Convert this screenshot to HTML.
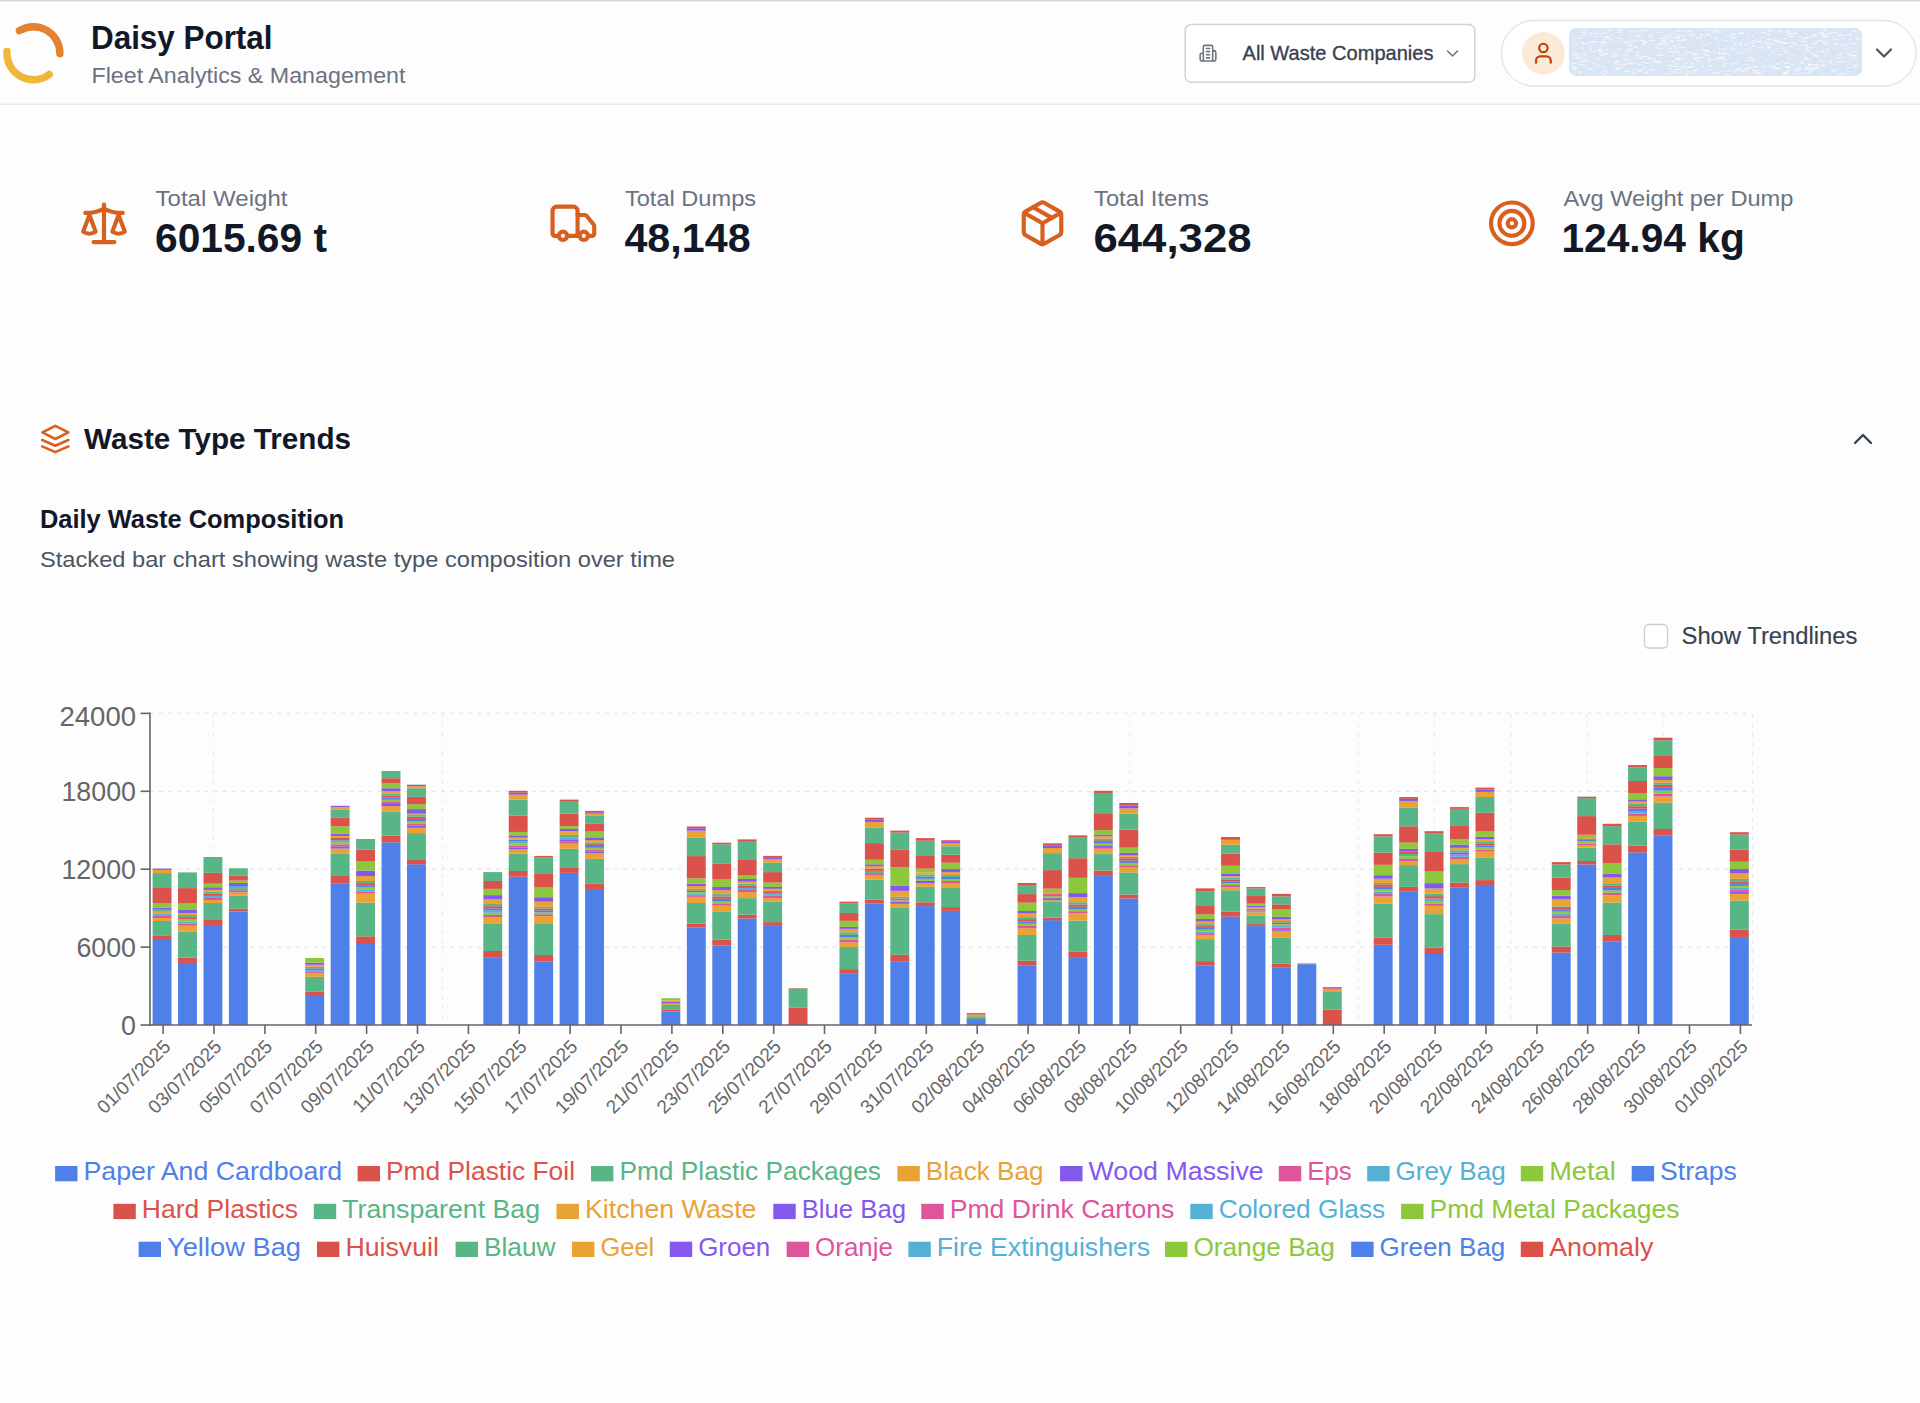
<!DOCTYPE html>
<html><head><meta charset="utf-8"><title>Daisy Portal</title>
<style>
html,body{margin:0;padding:0;background:#fdfdfe;width:1920px;height:1403px;overflow:hidden}
svg{display:block;font-family:"Liberation Sans",sans-serif}
</style></head><body>
<svg width="1920" height="1403" viewBox="0 0 1920 1403">
<rect x="0" y="0" width="1920" height="104" fill="#fdfdfe"/>
<rect x="0" y="0" width="1920" height="1.4" fill="#d3d5da"/>
<rect x="0" y="103.7" width="1920" height="1.2" fill="#e6e7ec"/>
<path d="M19.36 30.73 A26.5 26.5 0 0 1 59.90 53.66" fill="none" stroke="#e3822f" stroke-width="7.4" stroke-linecap="round"/>
<path d="M49.35 74.36 A26.5 26.5 0 0 1 6.96 51.35" fill="none" stroke="#efb73a" stroke-width="7.4" stroke-linecap="round"/>
<text x="91.0" y="48.5" font-size="32.3" fill="#111827" font-weight="bold" textLength="181.5" lengthAdjust="spacingAndGlyphs">Daisy Portal</text>
<text x="91.5" y="83.2" font-size="21.8" fill="#6b7280" textLength="314.0" lengthAdjust="spacingAndGlyphs">Fleet Analytics &amp; Management</text>
<rect x="1185.2" y="24.5" width="289.6" height="57.8" rx="6" fill="#ffffff" stroke="#cfd3da" stroke-width="1.5"/>
<g transform="translate(1198.60,43.80) scale(0.7833)" fill="none" stroke="#6b7280" stroke-width="2" stroke-linecap="round" stroke-linejoin="round"><path d="M6 22V4a2 2 0 0 1 2-2h8a2 2 0 0 1 2 2v18Z"/><path d="M6 12H4a2 2 0 0 0-2 2v6a2 2 0 0 0 2 2h2"/><path d="M18 9h2a2 2 0 0 1 2 2v9a2 2 0 0 1-2 2h-2"/><path d="M10 6h4"/><path d="M10 10h4"/><path d="M10 14h4"/><path d="M10 18h4"/></g>
<text x="1242.5" y="60.2" font-size="21" fill="#374151" textLength="191.0" lengthAdjust="spacingAndGlyphs" stroke="#374151" stroke-width="0.35">All Waste Companies</text>
<path d="M1447.5 51 l5 5 l5 -5" fill="none" stroke="#6b7280" stroke-width="1.6" stroke-linecap="round" stroke-linejoin="round"/>
<rect x="1501.5" y="20.5" width="414.5" height="65.5" rx="32.75" fill="#ffffff" stroke="#e2e4e9" stroke-width="1.3"/>
<circle cx="1543.4" cy="53.3" r="21.4" fill="#fbead6"/>
<g transform="translate(1530.80,40.60) scale(1.0500)" fill="none" stroke="#c2410c" stroke-width="2.1" stroke-linecap="round" stroke-linejoin="round"><path d="M19 21v-2a4 4 0 0 0-4-4H9a4 4 0 0 0-4 4v2"/><circle cx="12" cy="7" r="4"/></g>
<rect x="1569" y="27.9" width="293" height="48" rx="7" fill="#d9e4f4"/>
<path d="M1664.3 35.8h4.3v1h-4.3zM1725.3 45.5h1.3v1h-1.3zM1581.8 48.5h1.3v1h-1.3zM1693.3 66.2h1.6v1h-1.6zM1751.7 71.6h3.9v1h-3.9zM1852.2 31.1h5.3v1h-5.3zM1623.0 55.2h4.2v1h-4.2zM1728.8 31.8h1.3v1h-1.3zM1767.0 48.2h2.6v1h-2.6zM1781.1 42.0h5.9v1h-5.9zM1691.4 63.1h1.8v1h-1.8zM1582.3 59.1h4.8v1h-4.8zM1823.1 43.1h4.5v1h-4.5zM1757.4 73.7h5.1v1h-5.1zM1682.1 59.1h1.1v1h-1.1zM1807.0 67.9h2.4v1h-2.4zM1674.3 68.8h5.8v1h-5.8zM1621.8 39.4h2.2v1h-2.2zM1740.7 40.8h1.0v1h-1.0zM1719.5 56.8h4.4v1h-4.4zM1588.9 32.0h2.0v1h-2.0zM1668.9 31.4h1.0v1h-1.0zM1747.9 35.7h2.3v1h-2.3zM1705.2 50.8h1.4v1h-1.4zM1669.7 40.9h5.1v1h-5.1zM1577.7 71.8h3.6v1h-3.6zM1819.6 60.3h2.3v1h-2.3zM1636.3 52.3h2.8v1h-2.8zM1846.0 45.4h2.1v1h-2.1zM1666.8 65.0h5.9v1h-5.9zM1686.6 71.6h4.6v1h-4.6zM1671.9 53.7h1.7v1h-1.7zM1695.9 68.2h5.1v1h-5.1zM1643.5 42.2h2.2v1h-2.2zM1692.1 70.3h3.5v1h-3.5zM1721.8 29.8h3.2v1h-3.2zM1572.1 65.0h1.9v1h-1.9zM1779.9 54.0h2.6v1h-2.6zM1731.0 64.3h1.5v1h-1.5zM1642.6 41.5h4.9v1h-4.9zM1732.8 63.2h5.6v1h-5.6zM1772.4 68.4h5.7v1h-5.7zM1732.1 71.4h5.2v1h-5.2zM1606.0 48.9h1.4v1h-1.4zM1615.5 61.2h4.3v1h-4.3zM1617.5 48.4h3.6v1h-3.6zM1627.4 43.3h4.6v1h-4.6zM1730.6 48.8h1.1v1h-1.1zM1798.0 72.7h1.5v1h-1.5zM1582.4 64.1h2.4v1h-2.4zM1692.6 70.0h5.1v1h-5.1zM1596.8 31.6h4.4v1h-4.4zM1648.1 34.8h3.6v1h-3.6zM1602.5 36.3h1.3v1h-1.3zM1660.9 42.7h4.8v1h-4.8zM1715.0 37.0h2.7v1h-2.7zM1643.1 29.7h4.7v1h-4.7zM1625.6 50.4h5.7v1h-5.7zM1687.6 44.6h1.3v1h-1.3zM1591.4 62.3h2.3v1h-2.3zM1652.2 39.9h2.5v1h-2.5zM1660.1 45.0h1.0v1h-1.0zM1707.7 51.6h2.0v1h-2.0zM1572.4 40.9h1.4v1h-1.4zM1583.0 30.0h2.5v1h-2.5zM1777.2 68.6h2.9v1h-2.9zM1782.3 65.5h1.7v1h-1.7zM1637.2 30.4h1.7v1h-1.7zM1751.4 59.6h3.4v1h-3.4zM1800.7 62.7h3.5v1h-3.5zM1760.9 32.0h4.7v1h-4.7zM1592.4 41.0h4.6v1h-4.6zM1784.1 72.9h3.5v1h-3.5zM1756.1 32.5h1.7v1h-1.7zM1785.0 42.7h3.8v1h-3.8zM1765.6 42.1h3.6v1h-3.6zM1705.3 34.3h5.5v1h-5.5zM1852.7 71.1h1.1v1h-1.1zM1807.1 72.6h3.2v1h-3.2zM1631.4 71.6h2.1v1h-2.1zM1611.8 52.6h5.8v1h-5.8zM1637.6 69.4h3.4v1h-3.4zM1572.0 51.1h3.3v1h-3.3zM1571.5 62.8h5.2v1h-5.2zM1837.8 61.1h5.5v1h-5.5zM1678.2 46.7h6.0v1h-6.0zM1674.9 48.3h2.4v1h-2.4zM1642.8 41.0h3.6v1h-3.6zM1752.7 70.1h5.7v1h-5.7zM1778.2 31.2h4.7v1h-4.7zM1787.8 58.0h2.4v1h-2.4zM1837.9 34.7h3.4v1h-3.4zM1656.8 62.3h5.9v1h-5.9zM1759.9 42.5h3.8v1h-3.8zM1700.6 35.3h2.0v1h-2.0zM1669.5 33.1h2.2v1h-2.2zM1735.0 68.9h4.7v1h-4.7zM1690.2 52.6h2.9v1h-2.9zM1588.9 41.5h5.8v1h-5.8zM1716.0 57.3h5.3v1h-5.3zM1649.1 40.2h3.0v1h-3.0zM1845.7 67.2h5.4v1h-5.4zM1580.3 60.9h5.5v1h-5.5zM1808.8 67.5h5.9v1h-5.9zM1638.0 70.4h4.2v1h-4.2zM1603.3 32.2h3.6v1h-3.6zM1682.8 39.1h4.0v1h-4.0zM1825.5 50.4h2.2v1h-2.2zM1847.7 60.7h2.5v1h-2.5zM1714.5 59.4h3.1v1h-3.1zM1763.2 70.6h2.1v1h-2.1zM1668.4 47.9h4.4v1h-4.4zM1800.6 62.3h3.5v1h-3.5zM1850.3 43.0h5.1v1h-5.1zM1713.8 37.4h2.1v1h-2.1zM1762.6 71.7h1.7v1h-1.7zM1632.3 72.8h1.7v1h-1.7zM1782.0 73.9h5.7v1h-5.7zM1624.4 71.1h4.7v1h-4.7zM1762.4 46.0h2.9v1h-2.9zM1619.7 29.1h2.4v1h-2.4zM1846.2 34.6h5.8v1h-5.8zM1673.7 66.0h5.1v1h-5.1zM1626.6 45.4h5.5v1h-5.5zM1689.3 65.5h4.8v1h-4.8zM1581.0 31.8h5.6v1h-5.6zM1786.2 69.4h2.7v1h-2.7zM1834.9 57.5h5.7v1h-5.7zM1682.3 40.3h3.1v1h-3.1zM1808.0 63.8h4.0v1h-4.0zM1663.0 45.3h4.9v1h-4.9zM1627.8 62.9h2.2v1h-2.2zM1825.4 73.5h2.3v1h-2.3zM1598.8 51.4h4.5v1h-4.5zM1786.4 67.1h4.3v1h-4.3zM1813.2 42.2h3.8v1h-3.8zM1783.6 38.0h2.2v1h-2.2zM1615.2 68.8h3.9v1h-3.9zM1685.1 73.7h3.5v1h-3.5zM1803.8 58.4h6.0v1h-6.0zM1582.6 42.2h1.6v1h-1.6zM1851.2 55.2h5.7v1h-5.7zM1633.7 45.6h1.7v1h-1.7zM1644.4 56.0h4.3v1h-4.3zM1574.3 43.7h4.4v1h-4.4zM1660.9 38.2h5.0v1h-5.0zM1589.2 33.6h3.0v1h-3.0zM1661.0 54.5h2.8v1h-2.8zM1819.9 73.8h2.8v1h-2.8zM1703.7 36.3h1.1v1h-1.1zM1677.8 51.7h1.7v1h-1.7zM1721.1 70.6h1.5v1h-1.5zM1802.8 72.5h2.0v1h-2.0zM1842.6 72.9h3.4v1h-3.4zM1808.5 36.2h4.9v1h-4.9zM1687.5 67.1h5.1v1h-5.1zM1633.8 47.0h3.6v1h-3.6zM1582.8 54.3h4.8v1h-4.8zM1812.4 34.3h4.0v1h-4.0zM1751.6 42.8h3.1v1h-3.1zM1693.6 58.6h3.2v1h-3.2zM1577.7 56.9h3.4v1h-3.4zM1790.9 64.1h3.3v1h-3.3zM1707.3 33.8h1.6v1h-1.6zM1597.4 48.9h3.6v1h-3.6zM1718.3 31.4h3.5v1h-3.5zM1712.7 72.0h5.6v1h-5.6zM1798.1 70.9h1.3v1h-1.3zM1788.8 36.1h5.5v1h-5.5zM1631.0 40.8h3.5v1h-3.5zM1604.1 52.9h4.2v1h-4.2zM1601.1 73.7h4.1v1h-4.1zM1800.7 40.9h6.0v1h-6.0zM1674.8 63.4h3.2v1h-3.2zM1785.2 31.2h5.1v1h-5.1zM1661.0 29.1h1.2v1h-1.2zM1609.0 39.2h4.3v1h-4.3zM1571.8 45.0h1.5v1h-1.5zM1635.6 55.3h3.9v1h-3.9zM1821.9 64.2h3.0v1h-3.0zM1574.3 58.0h3.8v1h-3.8zM1642.6 69.7h1.2v1h-1.2zM1574.6 53.8h5.7v1h-5.7zM1805.3 36.9h2.5v1h-2.5zM1572.8 67.0h4.7v1h-4.7zM1784.6 49.4h2.1v1h-2.1zM1771.2 67.0h4.6v1h-4.6zM1730.5 48.6h4.9v1h-4.9zM1647.4 57.9h5.8v1h-5.8zM1824.5 29.7h2.3v1h-2.3zM1785.2 71.5h4.7v1h-4.7zM1696.9 61.6h3.9v1h-3.9zM1670.3 35.4h1.1v1h-1.1zM1834.3 71.5h1.5v1h-1.5zM1753.6 66.1h4.2v1h-4.2zM1599.8 33.4h4.8v1h-4.8zM1662.9 48.1h1.1v1h-1.1zM1652.4 61.2h2.8v1h-2.8zM1670.9 60.7h3.7v1h-3.7zM1819.3 33.1h5.1v1h-5.1zM1646.0 71.5h2.4v1h-2.4zM1751.8 45.0h3.0v1h-3.0zM1827.4 32.9h5.4v1h-5.4zM1630.4 40.8h5.5v1h-5.5zM1680.2 68.8h2.2v1h-2.2zM1761.7 62.4h1.8v1h-1.8zM1793.7 55.1h1.6v1h-1.6zM1825.9 39.7h2.0v1h-2.0zM1773.5 67.0h1.8v1h-1.8zM1642.3 43.7h3.6v1h-3.6zM1600.3 72.3h1.5v1h-1.5zM1854.3 64.8h4.7v1h-4.7zM1627.5 57.7h1.5v1h-1.5zM1770.7 51.5h4.2v1h-4.2zM1752.3 40.3h3.1v1h-3.1zM1623.7 58.5h4.9v1h-4.9zM1712.1 72.9h1.2v1h-1.2zM1617.3 64.2h5.7v1h-5.7zM1718.5 57.8h5.1v1h-5.1zM1673.4 31.5h2.4v1h-2.4zM1804.2 57.5h3.3v1h-3.3zM1806.8 65.7h3.3v1h-3.3zM1728.9 34.6h5.2v1h-5.2zM1816.0 41.0h2.9v1h-2.9zM1652.0 40.0h2.5v1h-2.5zM1694.4 57.7h4.3v1h-4.3zM1759.9 40.3h1.5v1h-1.5zM1638.3 63.9h2.7v1h-2.7zM1730.9 40.9h2.2v1h-2.2zM1713.0 31.6h3.3v1h-3.3zM1572.9 66.8h3.3v1h-3.3zM1762.6 66.8h2.9v1h-2.9zM1666.2 73.2h3.6v1h-3.6zM1668.5 67.8h2.8v1h-2.8zM1722.4 63.7h2.1v1h-2.1zM1692.6 53.9h5.1v1h-5.1zM1809.4 47.2h3.5v1h-3.5zM1666.3 43.3h2.5v1h-2.5zM1826.1 53.5h1.2v1h-1.2zM1748.6 57.2h4.5v1h-4.5zM1767.1 38.6h4.3v1h-4.3zM1790.7 33.6h1.9v1h-1.9zM1794.1 70.1h4.3v1h-4.3zM1807.9 64.4h3.8v1h-3.8zM1658.0 48.0h2.6v1h-2.6zM1755.8 71.0h1.3v1h-1.3zM1582.3 34.3h5.1v1h-5.1zM1835.6 49.1h1.1v1h-1.1zM1741.5 71.2h5.9v1h-5.9zM1689.8 33.6h4.2v1h-4.2zM1608.1 29.8h4.6v1h-4.6zM1776.5 67.5h4.6v1h-4.6zM1644.2 72.4h4.6v1h-4.6zM1575.2 58.3h5.1v1h-5.1zM1711.1 31.7h2.8v1h-2.8zM1675.6 58.0h4.1v1h-4.1zM1852.5 66.4h4.0v1h-4.0zM1744.3 69.3h5.0v1h-5.0zM1571.5 40.8h3.1v1h-3.1zM1804.8 68.0h3.9v1h-3.9zM1628.7 62.8h5.7v1h-5.7zM1745.8 59.5h3.3v1h-3.3zM1644.4 62.8h5.0v1h-5.0zM1596.3 65.3h4.9v1h-4.9zM1737.9 69.4h5.4v1h-5.4zM1708.3 55.5h1.9v1h-1.9zM1623.0 60.5h2.8v1h-2.8zM1686.9 52.3h1.7v1h-1.7zM1797.8 36.0h4.0v1h-4.0zM1820.4 50.9h3.8v1h-3.8zM1806.8 72.4h2.3v1h-2.3zM1628.9 37.1h1.4v1h-1.4zM1833.1 31.9h4.0v1h-4.0zM1605.5 72.2h2.3v1h-2.3zM1755.5 72.0h4.3v1h-4.3zM1634.9 30.7h2.3v1h-2.3zM1831.0 69.7h5.2v1h-5.2zM1601.4 43.6h2.3v1h-2.3zM1709.6 36.6h2.2v1h-2.2zM1766.2 29.6h4.6v1h-4.6zM1820.6 69.0h1.7v1h-1.7zM1701.3 44.3h5.1v1h-5.1zM1751.9 35.4h2.1v1h-2.1zM1647.7 47.5h1.8v1h-1.8zM1812.8 44.1h1.8v1h-1.8zM1587.4 69.3h4.3v1h-4.3zM1708.5 41.9h2.3v1h-2.3zM1599.1 42.0h5.5v1h-5.5zM1780.2 42.2h5.9v1h-5.9zM1803.4 44.3h1.7v1h-1.7zM1810.7 52.7h1.9v1h-1.9zM1833.7 38.8h3.9v1h-3.9zM1622.9 63.7h4.6v1h-4.6zM1593.8 32.9h4.0v1h-4.0zM1804.7 55.2h2.0v1h-2.0zM1782.0 47.4h4.6v1h-4.6zM1713.0 29.7h5.6v1h-5.6zM1676.7 36.4h2.9v1h-2.9zM1572.3 52.4h3.2v1h-3.2zM1588.6 68.3h5.8v1h-5.8zM1718.8 52.9h3.7v1h-3.7zM1849.6 39.1h1.9v1h-1.9zM1643.1 65.8h1.2v1h-1.2zM1772.3 37.8h1.1v1h-1.1zM1737.0 52.5h4.5v1h-4.5zM1821.4 61.3h1.2v1h-1.2zM1713.2 51.5h2.4v1h-2.4zM1613.4 54.8h4.7v1h-4.7zM1808.9 71.2h2.9v1h-2.9zM1794.7 44.2h2.2v1h-2.2zM1805.7 67.1h1.3v1h-1.3zM1846.9 71.0h2.2v1h-2.2zM1753.2 45.4h3.7v1h-3.7zM1695.7 51.7h1.1v1h-1.1zM1804.1 68.8h5.4v1h-5.4zM1755.8 41.0h4.4v1h-4.4zM1727.2 70.6h4.1v1h-4.1zM1720.8 48.5h5.8v1h-5.8zM1659.0 58.1h1.6v1h-1.6zM1846.4 52.1h2.3v1h-2.3zM1724.7 35.7h1.6v1h-1.6zM1655.6 47.3h2.4v1h-2.4zM1703.7 53.7h4.1v1h-4.1zM1660.4 39.9h2.1v1h-2.1zM1681.4 55.4h1.1v1h-1.1zM1819.2 39.7h3.8v1h-3.8zM1616.7 32.0h5.4v1h-5.4zM1748.5 67.2h5.1v1h-5.1zM1783.8 62.4h4.8v1h-4.8zM1797.1 60.9h5.6v1h-5.6zM1821.8 29.2h4.8v1h-4.8zM1714.4 72.3h3.9v1h-3.9zM1796.7 68.3h4.0v1h-4.0zM1701.3 49.6h4.6v1h-4.6zM1683.5 54.0h2.9v1h-2.9zM1797.7 67.2h3.5v1h-3.5zM1624.1 42.7h1.7v1h-1.7zM1738.5 33.0h5.6v1h-5.6zM1813.9 66.7h5.8v1h-5.8zM1693.8 70.0h1.1v1h-1.1zM1726.1 73.9h3.6v1h-3.6zM1768.3 46.5h2.8v1h-2.8zM1672.1 71.7h4.4v1h-4.4zM1599.5 45.8h3.0v1h-3.0zM1736.3 68.6h5.8v1h-5.8zM1697.8 57.1h6.0v1h-6.0zM1723.7 65.7h1.9v1h-1.9zM1852.8 66.2h3.6v1h-3.6zM1826.8 47.9h1.8v1h-1.8zM1718.3 51.7h1.9v1h-1.9zM1659.3 60.1h1.0v1h-1.0zM1813.5 55.4h4.3v1h-4.3zM1724.1 73.9h3.9v1h-3.9zM1606.0 36.1h4.8v1h-4.8zM1747.5 65.3h1.3v1h-1.3zM1792.9 43.5h4.6v1h-4.6zM1738.7 44.7h3.2v1h-3.2zM1697.6 56.9h2.2v1h-2.2zM1713.7 71.7h2.2v1h-2.2zM1710.5 64.7h2.2v1h-2.2zM1674.2 37.4h5.9v1h-5.9zM1732.7 34.2h3.7v1h-3.7zM1672.2 40.0h2.0v1h-2.0zM1639.3 30.6h4.3v1h-4.3zM1615.9 60.8h1.5v1h-1.5zM1716.4 39.2h3.3v1h-3.3zM1774.5 40.7h5.5v1h-5.5zM1677.0 40.1h4.0v1h-4.0zM1822.2 34.5h3.6v1h-3.6zM1734.5 43.0h2.9v1h-2.9zM1602.4 54.3h2.8v1h-2.8zM1656.5 32.0h2.6v1h-2.6zM1607.3 61.3h2.4v1h-2.4zM1772.4 40.2h5.2v1h-5.2zM1782.4 61.1h1.2v1h-1.2zM1617.7 37.9h2.5v1h-2.5zM1582.3 43.0h4.2v1h-4.2zM1812.8 54.7h4.6v1h-4.6zM1696.3 59.8h2.7v1h-2.7zM1811.3 63.9h2.4v1h-2.4zM1817.0 56.3h1.2v1h-1.2zM1786.9 32.9h4.5v1h-4.5zM1786.3 66.3h2.4v1h-2.4zM1783.7 66.3h4.1v1h-4.1zM1586.6 60.4h3.1v1h-3.1zM1838.3 34.7h4.8v1h-4.8zM1773.4 65.3h2.3v1h-2.3zM1850.2 57.7h3.7v1h-3.7zM1588.1 45.1h3.1v1h-3.1zM1639.5 39.9h3.6v1h-3.6zM1604.0 42.0h2.8v1h-2.8zM1700.0 34.1h2.6v1h-2.6zM1675.5 36.6h1.4v1h-1.4zM1853.3 54.4h1.5v1h-1.5zM1696.1 37.5h3.7v1h-3.7zM1758.9 40.3h2.2v1h-2.2zM1579.0 63.8h5.2v1h-5.2zM1665.1 37.3h5.1v1h-5.1zM1713.4 51.5h1.8v1h-1.8zM1738.4 32.6h4.4v1h-4.4zM1698.6 72.6h1.4v1h-1.4zM1697.6 37.6h4.6v1h-4.6zM1813.2 67.5h4.9v1h-4.9zM1652.6 58.8h3.6v1h-3.6zM1831.4 36.4h2.5v1h-2.5zM1733.3 44.7h2.0v1h-2.0zM1656.5 54.7h5.8v1h-5.8zM1579.0 37.5h4.4v1h-4.4zM1595.5 58.7h2.9v1h-2.9zM1690.9 52.8h3.8v1h-3.8zM1603.9 37.1h5.4v1h-5.4zM1603.3 67.8h2.3v1h-2.3zM1723.9 40.3h3.4v1h-3.4zM1636.2 54.8h1.6v1h-1.6zM1740.5 32.6h3.0v1h-3.0zM1600.4 66.4h3.0v1h-3.0zM1847.5 54.3h4.9v1h-4.9zM1794.5 31.6h2.2v1h-2.2zM1575.4 55.7h2.1v1h-2.1zM1767.0 66.2h1.6v1h-1.6zM1783.3 71.7h4.6v1h-4.6zM1603.5 70.6h4.4v1h-4.4zM1626.6 49.1h5.2v1h-5.2zM1680.7 35.5h5.4v1h-5.4zM1769.6 65.4h5.7v1h-5.7zM1766.7 46.7h3.4v1h-3.4zM1740.7 31.0h1.8v1h-1.8zM1705.7 55.0h2.9v1h-2.9zM1572.7 55.1h2.7v1h-2.7zM1703.3 73.4h1.2v1h-1.2zM1764.2 41.3h2.4v1h-2.4zM1784.0 51.9h4.2v1h-4.2zM1729.6 47.3h1.3v1h-1.3zM1664.1 73.5h3.4v1h-3.4zM1641.1 39.6h2.7v1h-2.7zM1573.1 68.2h3.3v1h-3.3zM1734.8 42.6h1.8v1h-1.8zM1657.8 42.9h4.6v1h-4.6zM1841.0 44.3h5.6v1h-5.6zM1590.5 50.8h5.5v1h-5.5zM1645.2 30.0h1.8v1h-1.8zM1773.9 38.8h3.0v1h-3.0zM1744.6 67.9h4.2v1h-4.2zM1782.4 72.3h4.0v1h-4.0zM1804.1 68.4h2.7v1h-2.7zM1757.9 47.2h4.4v1h-4.4zM1667.3 51.2h4.0v1h-4.0zM1704.5 29.6h5.6v1h-5.6zM1665.8 33.2h1.8v1h-1.8zM1792.0 33.0h5.1v1h-5.1zM1744.3 43.9h4.7v1h-4.7zM1775.9 63.3h4.9v1h-4.9zM1793.5 73.0h3.3v1h-3.3zM1721.7 71.3h1.7v1h-1.7zM1708.0 58.5h4.9v1h-4.9zM1856.0 39.3h4.8v1h-4.8zM1579.0 35.0h1.3v1h-1.3zM1730.9 37.2h5.7v1h-5.7zM1617.7 30.3h4.9v1h-4.9zM1853.9 51.5h4.2v1h-4.2zM1686.7 67.9h1.3v1h-1.3zM1635.5 40.3h2.3v1h-2.3zM1657.0 73.7h2.1v1h-2.1zM1616.1 67.8h5.3v1h-5.3zM1787.4 66.0h2.4v1h-2.4zM1599.1 36.6h4.4v1h-4.4zM1769.6 30.7h3.5v1h-3.5zM1662.1 68.5h1.6v1h-1.6zM1613.6 62.2h3.5v1h-3.5zM1672.8 51.3h5.6v1h-5.6zM1649.6 37.0h2.3v1h-2.3zM1583.4 51.9h3.0v1h-3.0zM1822.7 61.3h3.0v1h-3.0zM1691.7 72.8h2.9v1h-2.9zM1689.1 35.4h6.0v1h-6.0zM1679.6 39.8h2.0v1h-2.0zM1813.8 64.3h5.5v1h-5.5zM1770.9 43.6h4.2v1h-4.2zM1638.5 57.3h4.7v1h-4.7zM1766.0 43.5h4.1v1h-4.1zM1707.3 61.5h3.6v1h-3.6zM1634.7 35.4h5.6v1h-5.6zM1721.9 52.7h5.1v1h-5.1zM1809.3 69.2h5.3v1h-5.3zM1680.8 66.4h5.1v1h-5.1zM1615.3 40.3h1.5v1h-1.5zM1802.3 52.5h3.3v1h-3.3zM1684.9 73.9h4.5v1h-4.5zM1708.8 64.9h4.8v1h-4.8zM1766.9 45.5h3.6v1h-3.6zM1677.8 44.3h2.9v1h-2.9zM1628.8 54.7h1.3v1h-1.3zM1777.8 41.4h2.6v1h-2.6zM1678.0 31.0h3.2v1h-3.2zM1804.5 44.9h2.9v1h-2.9zM1678.2 59.0h2.6v1h-2.6zM1788.7 46.1h3.6v1h-3.6zM1830.6 63.1h1.1v1h-1.1zM1704.2 49.8h5.2v1h-5.2zM1707.4 69.1h3.2v1h-3.2zM1686.7 30.8h4.4v1h-4.4zM1792.5 63.6h1.6v1h-1.6zM1593.2 65.8h1.5v1h-1.5zM1822.1 35.5h2.7v1h-2.7zM1572.7 73.5h2.4v1h-2.4zM1661.2 40.5h5.3v1h-5.3zM1718.2 47.9h1.3v1h-1.3zM1820.6 65.1h5.3v1h-5.3zM1629.2 31.3h3.7v1h-3.7zM1704.7 51.0h3.9v1h-3.9zM1801.8 38.0h5.6v1h-5.6zM1585.7 43.1h3.7v1h-3.7zM1655.0 61.0h5.0v1h-5.0zM1587.6 48.5h4.2v1h-4.2zM1819.4 32.2h4.0v1h-4.0zM1836.7 54.2h5.0v1h-5.0zM1765.1 59.4h2.5v1h-2.5zM1812.4 35.6h5.6v1h-5.6zM1583.0 66.6h2.5v1h-2.5zM1738.6 43.3h3.8v1h-3.8zM1833.6 43.6h5.2v1h-5.2zM1801.2 73.1h3.0v1h-3.0zM1680.4 57.8h2.1v1h-2.1zM1598.0 49.9h4.6v1h-4.6zM1766.5 34.1h5.1v1h-5.1zM1836.9 73.8h5.7v1h-5.7zM1654.7 44.7h4.8v1h-4.8zM1743.2 53.3h1.4v1h-1.4zM1649.1 69.2h5.2v1h-5.2zM1670.2 71.5h4.3v1h-4.3zM1622.5 64.4h2.5v1h-2.5zM1742.5 49.8h1.2v1h-1.2zM1599.0 58.1h1.7v1h-1.7zM1672.6 45.9h4.3v1h-4.3zM1822.5 50.6h1.7v1h-1.7zM1824.2 34.3h3.5v1h-3.5zM1604.9 50.1h1.8v1h-1.8zM1717.0 45.5h2.0v1h-2.0zM1637.0 62.8h1.8v1h-1.8zM1579.9 46.7h3.6v1h-3.6zM1827.5 32.8h3.9v1h-3.9zM1742.4 64.3h4.6v1h-4.6zM1641.8 56.0h5.9v1h-5.9zM1749.1 60.1h5.1v1h-5.1zM1804.4 49.8h5.6v1h-5.6zM1841.8 47.5h3.0v1h-3.0zM1641.5 62.0h4.4v1h-4.4zM1670.2 35.3h2.0v1h-2.0zM1821.8 42.5h5.8v1h-5.8zM1643.6 66.7h2.2v1h-2.2zM1572.3 51.0h1.1v1h-1.1zM1805.0 47.8h4.0v1h-4.0zM1749.4 42.1h1.4v1h-1.4zM1624.0 41.2h5.8v1h-5.8zM1684.6 51.5h5.8v1h-5.8zM1855.7 37.5h5.2v1h-5.2zM1701.9 65.4h2.3v1h-2.3zM1600.1 53.9h5.3v1h-5.3zM1675.2 58.8h4.2v1h-4.2zM1721.4 59.4h5.5v1h-5.5zM1827.6 61.8h4.7v1h-4.7zM1612.6 55.4h3.9v1h-3.9zM1684.0 62.6h4.2v1h-4.2zM1790.6 42.1h3.7v1h-3.7zM1799.6 44.6h1.7v1h-1.7zM1823.7 36.3h4.7v1h-4.7zM1660.8 31.4h2.5v1h-2.5zM1849.5 72.3h1.9v1h-1.9zM1842.8 37.9h2.6v1h-2.6zM1602.2 40.7h3.0v1h-3.0z" fill="#f7f8fb"/>
<path d="M1612.5 34.3h2.5v1h-2.5zM1701.5 42.5h5.0v1h-5.0zM1641.3 54.8h3.6v1h-3.6zM1738.0 49.5h5.2v1h-5.2zM1707.5 58.9h1.3v1h-1.3zM1619.4 34.3h1.3v1h-1.3zM1608.2 40.1h3.0v1h-3.0zM1594.2 49.2h3.7v1h-3.7zM1677.3 54.5h5.8v1h-5.8zM1830.1 64.1h5.4v1h-5.4zM1684.0 47.0h1.5v1h-1.5zM1600.2 45.4h1.1v1h-1.1zM1675.9 34.5h5.2v1h-5.2zM1727.4 30.2h3.6v1h-3.6zM1619.1 63.7h3.7v1h-3.7zM1665.9 39.0h5.1v1h-5.1zM1816.6 65.3h5.1v1h-5.1zM1579.0 41.6h2.3v1h-2.3zM1846.5 49.1h5.7v1h-5.7zM1627.7 38.2h4.1v1h-4.1zM1813.0 50.6h4.3v1h-4.3zM1595.4 58.7h5.5v1h-5.5zM1787.0 50.5h1.9v1h-1.9zM1607.6 35.8h5.5v1h-5.5zM1613.1 66.2h5.9v1h-5.9zM1850.6 58.2h3.6v1h-3.6zM1645.7 47.9h1.7v1h-1.7zM1672.9 49.6h3.9v1h-3.9zM1747.4 51.7h3.6v1h-3.6zM1701.3 53.0h3.4v1h-3.4zM1592.1 59.1h4.9v1h-4.9zM1825.3 72.5h2.1v1h-2.1zM1685.7 50.9h5.9v1h-5.9zM1750.7 52.1h1.3v1h-1.3zM1614.0 70.4h3.9v1h-3.9zM1591.9 71.2h4.2v1h-4.2zM1595.1 67.5h1.3v1h-1.3zM1701.7 44.3h3.8v1h-3.8zM1806.8 48.4h3.5v1h-3.5zM1684.2 51.8h4.4v1h-4.4zM1669.7 66.5h4.5v1h-4.5zM1595.3 66.9h5.4v1h-5.4zM1616.4 49.1h2.3v1h-2.3zM1851.1 53.6h2.2v1h-2.2zM1739.6 52.8h4.8v1h-4.8zM1854.6 35.7h4.6v1h-4.6zM1583.6 66.6h5.5v1h-5.5zM1716.3 66.6h5.0v1h-5.0zM1739.2 69.2h4.4v1h-4.4zM1601.2 66.6h3.8v1h-3.8zM1709.0 59.8h4.8v1h-4.8zM1588.5 41.1h4.4v1h-4.4zM1807.2 51.9h5.4v1h-5.4zM1611.5 44.5h2.6v1h-2.6zM1600.3 66.6h2.4v1h-2.4zM1678.5 72.0h5.4v1h-5.4zM1619.2 36.3h2.0v1h-2.0zM1714.2 38.9h5.5v1h-5.5zM1740.1 29.0h3.0v1h-3.0zM1602.4 35.9h3.6v1h-3.6zM1842.1 61.5h4.2v1h-4.2zM1702.7 53.8h1.2v1h-1.2zM1607.9 40.3h4.2v1h-4.2zM1657.8 49.7h5.8v1h-5.8zM1634.8 63.2h2.5v1h-2.5zM1588.3 46.7h5.5v1h-5.5zM1585.2 50.3h2.9v1h-2.9zM1846.8 56.8h2.3v1h-2.3zM1662.1 41.4h1.0v1h-1.0zM1638.4 50.4h5.8v1h-5.8zM1838.3 37.2h5.0v1h-5.0zM1580.8 53.9h2.6v1h-2.6zM1638.4 47.8h4.1v1h-4.1zM1707.7 65.9h5.2v1h-5.2zM1820.4 49.2h2.3v1h-2.3zM1843.4 33.8h4.0v1h-4.0zM1755.1 33.1h1.8v1h-1.8zM1689.0 41.7h2.5v1h-2.5zM1780.7 38.2h1.0v1h-1.0zM1693.0 65.9h3.0v1h-3.0zM1755.5 69.9h1.4v1h-1.4zM1837.7 46.5h5.5v1h-5.5zM1606.4 40.1h4.6v1h-4.6zM1754.3 32.7h4.7v1h-4.7zM1844.8 35.1h5.3v1h-5.3zM1781.8 65.7h2.0v1h-2.0zM1805.9 35.5h3.5v1h-3.5zM1581.6 37.2h1.8v1h-1.8zM1766.7 69.3h1.8v1h-1.8zM1822.4 54.0h3.9v1h-3.9zM1755.1 73.3h3.9v1h-3.9zM1748.4 48.5h3.6v1h-3.6zM1750.7 50.4h1.7v1h-1.7zM1641.2 35.7h1.5v1h-1.5zM1756.9 49.0h5.7v1h-5.7zM1687.9 39.7h1.3v1h-1.3zM1628.5 56.4h3.5v1h-3.5zM1585.0 69.0h4.9v1h-4.9zM1637.9 30.7h2.7v1h-2.7zM1824.5 43.8h2.2v1h-2.2zM1752.6 60.2h4.3v1h-4.3zM1706.2 66.8h4.5v1h-4.5zM1632.0 57.0h1.4v1h-1.4zM1612.6 30.2h1.5v1h-1.5zM1770.5 57.5h4.5v1h-4.5zM1589.9 55.6h2.8v1h-2.8zM1807.0 69.1h1.3v1h-1.3zM1603.2 30.5h5.2v1h-5.2zM1848.6 51.7h5.3v1h-5.3zM1579.9 47.6h3.2v1h-3.2zM1571.4 38.1h4.8v1h-4.8zM1572.3 51.1h3.5v1h-3.5zM1624.1 51.3h2.7v1h-2.7zM1772.4 51.4h1.5v1h-1.5zM1594.3 64.5h4.5v1h-4.5zM1724.1 63.0h4.8v1h-4.8zM1671.4 43.7h1.8v1h-1.8zM1665.5 37.5h5.9v1h-5.9zM1682.8 30.5h3.0v1h-3.0zM1611.8 56.2h3.0v1h-3.0zM1832.5 48.4h3.9v1h-3.9zM1692.3 39.3h4.6v1h-4.6zM1793.9 60.5h5.3v1h-5.3zM1755.8 49.4h2.6v1h-2.6zM1599.2 47.9h4.9v1h-4.9zM1750.0 47.4h4.4v1h-4.4zM1600.1 54.9h3.7v1h-3.7zM1689.2 71.7h2.1v1h-2.1zM1684.0 63.3h1.6v1h-1.6zM1574.8 47.8h3.1v1h-3.1zM1672.4 40.9h2.1v1h-2.1zM1841.7 52.7h2.1v1h-2.1zM1683.9 38.5h1.6v1h-1.6zM1636.1 72.4h2.8v1h-2.8zM1693.7 37.4h1.0v1h-1.0zM1838.5 67.5h1.3v1h-1.3zM1831.9 64.3h1.7v1h-1.7zM1753.4 29.7h1.1v1h-1.1zM1831.4 64.6h1.8v1h-1.8zM1746.2 64.2h4.3v1h-4.3zM1798.0 66.7h2.0v1h-2.0zM1723.9 62.4h3.2v1h-3.2zM1712.5 51.4h3.7v1h-3.7zM1847.7 32.4h4.2v1h-4.2zM1579.2 56.4h4.4v1h-4.4zM1829.5 30.5h4.6v1h-4.6zM1716.9 72.9h4.3v1h-4.3zM1753.8 64.3h1.2v1h-1.2zM1572.8 37.5h5.6v1h-5.6zM1760.5 64.5h5.5v1h-5.5zM1614.7 29.7h1.0v1h-1.0zM1606.0 72.5h1.4v1h-1.4zM1782.3 37.4h1.3v1h-1.3zM1752.0 60.9h3.3v1h-3.3zM1660.6 61.8h1.8v1h-1.8zM1697.4 59.5h1.7v1h-1.7zM1682.1 64.4h5.7v1h-5.7zM1734.2 42.2h1.3v1h-1.3zM1773.5 66.2h2.7v1h-2.7zM1694.4 69.0h2.9v1h-2.9zM1806.0 68.9h1.2v1h-1.2zM1816.1 65.3h4.4v1h-4.4zM1670.9 32.8h3.8v1h-3.8zM1858.2 45.8h1.5v1h-1.5zM1720.6 29.9h1.2v1h-1.2zM1795.4 48.2h5.7v1h-5.7zM1731.5 68.2h3.3v1h-3.3zM1700.1 36.2h5.8v1h-5.8zM1797.5 60.9h4.2v1h-4.2zM1587.1 35.5h4.8v1h-4.8zM1765.9 42.4h4.0v1h-4.0zM1581.4 70.7h2.1v1h-2.1zM1598.9 70.8h5.2v1h-5.2zM1776.6 53.9h1.7v1h-1.7zM1662.6 69.6h1.6v1h-1.6zM1675.9 73.6h6.0v1h-6.0zM1649.9 38.3h4.1v1h-4.1zM1804.5 44.1h5.2v1h-5.2zM1822.1 41.0h1.9v1h-1.9zM1605.8 61.2h5.1v1h-5.1zM1663.4 61.0h2.9v1h-2.9zM1687.8 35.2h4.0v1h-4.0zM1812.8 52.7h3.0v1h-3.0zM1696.4 73.2h5.0v1h-5.0zM1850.3 63.9h5.7v1h-5.7zM1596.3 53.6h5.2v1h-5.2zM1735.2 58.3h2.0v1h-2.0zM1653.0 73.4h2.5v1h-2.5zM1588.9 46.5h3.2v1h-3.2zM1602.5 39.1h5.8v1h-5.8zM1615.5 44.2h2.8v1h-2.8zM1733.7 51.4h5.6v1h-5.6zM1828.6 60.0h5.1v1h-5.1zM1752.5 56.1h2.8v1h-2.8zM1754.3 30.9h3.1v1h-3.1zM1714.4 53.9h2.3v1h-2.3zM1599.8 36.7h3.6v1h-3.6zM1619.8 41.0h1.5v1h-1.5zM1586.7 69.1h3.9v1h-3.9zM1839.1 67.5h2.6v1h-2.6zM1806.0 42.7h4.0v1h-4.0zM1777.9 39.0h2.5v1h-2.5zM1687.1 31.9h1.6v1h-1.6zM1811.5 34.8h3.2v1h-3.2zM1802.8 36.2h2.8v1h-2.8zM1679.5 72.1h2.0v1h-2.0zM1648.9 63.7h2.9v1h-2.9zM1622.0 67.3h2.6v1h-2.6zM1832.8 63.9h5.4v1h-5.4zM1609.1 41.4h1.1v1h-1.1zM1762.1 44.8h3.1v1h-3.1zM1752.1 37.2h1.6v1h-1.6zM1603.0 64.6h2.1v1h-2.1zM1843.6 48.1h5.7v1h-5.7zM1660.4 35.1h4.5v1h-4.5zM1840.5 44.8h2.5v1h-2.5zM1611.9 54.3h2.7v1h-2.7zM1728.9 63.2h1.8v1h-1.8zM1743.4 49.8h4.8v1h-4.8zM1588.4 41.6h2.0v1h-2.0zM1856.7 62.8h1.4v1h-1.4zM1835.8 58.0h4.1v1h-4.1zM1624.5 57.7h5.2v1h-5.2zM1619.5 64.3h5.2v1h-5.2zM1677.1 53.8h2.8v1h-2.8zM1639.9 30.9h3.8v1h-3.8zM1807.1 60.8h5.5v1h-5.5zM1668.5 48.7h4.3v1h-4.3zM1664.2 49.7h5.9v1h-5.9zM1820.2 72.8h5.8v1h-5.8zM1804.6 31.7h4.4v1h-4.4zM1757.4 42.5h2.7v1h-2.7zM1697.6 67.9h3.8v1h-3.8zM1789.0 34.2h6.0v1h-6.0zM1774.7 48.2h5.4v1h-5.4zM1822.2 54.3h5.6v1h-5.6zM1619.4 62.5h2.7v1h-2.7zM1744.9 33.5h3.7v1h-3.7zM1603.7 29.9h1.6v1h-1.6zM1624.4 53.9h2.5v1h-2.5zM1669.6 35.8h3.5v1h-3.5zM1801.5 30.6h1.9v1h-1.9zM1814.4 46.7h5.4v1h-5.4zM1592.9 43.8h2.1v1h-2.1zM1646.5 54.6h3.6v1h-3.6zM1856.7 30.5h3.8v1h-3.8zM1822.2 63.8h4.2v1h-4.2zM1675.5 41.7h5.0v1h-5.0zM1841.3 59.7h2.5v1h-2.5zM1594.0 37.0h3.9v1h-3.9zM1673.8 63.8h3.1v1h-3.1zM1625.2 53.2h5.4v1h-5.4zM1836.8 38.6h2.6v1h-2.6zM1587.5 47.6h1.2v1h-1.2zM1855.4 31.5h4.1v1h-4.1zM1726.1 55.5h3.8v1h-3.8zM1614.0 37.0h4.7v1h-4.7zM1801.6 49.7h2.6v1h-2.6zM1602.0 62.0h1.3v1h-1.3zM1689.1 70.4h5.7v1h-5.7zM1637.6 38.1h4.8v1h-4.8zM1710.8 69.1h1.8v1h-1.8zM1743.1 49.4h3.9v1h-3.9zM1631.4 68.8h2.8v1h-2.8zM1819.6 37.2h5.3v1h-5.3zM1656.7 30.1h1.6v1h-1.6zM1573.7 70.0h1.8v1h-1.8zM1668.8 70.3h4.6v1h-4.6zM1853.1 30.5h2.2v1h-2.2zM1695.0 33.7h1.1v1h-1.1zM1610.1 48.3h1.9v1h-1.9zM1633.0 72.5h5.4v1h-5.4zM1675.4 29.5h4.4v1h-4.4zM1727.7 53.7h4.5v1h-4.5zM1746.1 70.7h2.3v1h-2.3zM1661.9 72.7h1.0v1h-1.0zM1816.8 52.0h4.0v1h-4.0zM1776.1 46.7h3.6v1h-3.6zM1635.3 56.6h2.3v1h-2.3zM1620.6 66.0h3.3v1h-3.3zM1811.2 33.1h4.2v1h-4.2zM1629.1 48.0h5.0v1h-5.0zM1776.2 42.3h3.0v1h-3.0zM1837.3 37.6h5.9v1h-5.9zM1718.4 66.1h4.4v1h-4.4zM1788.0 54.4h1.3v1h-1.3zM1775.8 50.7h1.3v1h-1.3zM1691.4 55.3h6.0v1h-6.0zM1733.7 43.6h2.4v1h-2.4zM1701.9 71.1h3.2v1h-3.2zM1600.0 33.3h4.9v1h-4.9zM1690.4 58.6h2.3v1h-2.3zM1768.5 36.0h1.3v1h-1.3zM1838.8 33.2h3.4v1h-3.4zM1837.3 30.5h4.0v1h-4.0zM1666.9 49.2h2.2v1h-2.2zM1732.0 33.3h3.8v1h-3.8zM1619.9 71.4h2.7v1h-2.7zM1629.6 34.7h2.2v1h-2.2zM1715.5 69.1h1.1v1h-1.1zM1711.7 64.6h3.9v1h-3.9zM1666.3 72.9h6.0v1h-6.0zM1709.2 51.4h4.9v1h-4.9zM1787.4 57.6h2.0v1h-2.0zM1814.6 64.4h1.5v1h-1.5zM1671.6 36.3h5.8v1h-5.8zM1785.7 35.1h5.1v1h-5.1zM1831.6 62.5h5.2v1h-5.2zM1741.0 48.6h5.1v1h-5.1zM1843.4 34.2h5.8v1h-5.8zM1702.9 39.6h3.5v1h-3.5zM1768.4 61.0h3.0v1h-3.0zM1799.6 59.7h5.7v1h-5.7zM1688.0 32.9h4.3v1h-4.3zM1668.8 55.8h5.2v1h-5.2zM1667.6 38.6h2.8v1h-2.8zM1772.9 48.9h4.3v1h-4.3zM1605.8 59.7h1.2v1h-1.2zM1635.6 69.0h4.1v1h-4.1zM1722.8 29.0h1.9v1h-1.9zM1679.5 70.8h5.5v1h-5.5zM1592.9 57.1h3.2v1h-3.2zM1675.8 72.9h1.3v1h-1.3zM1767.9 54.1h3.2v1h-3.2zM1664.7 35.2h5.8v1h-5.8zM1852.7 58.2h5.0v1h-5.0zM1680.6 72.3h4.5v1h-4.5zM1650.9 36.3h3.9v1h-3.9zM1848.5 41.0h2.0v1h-2.0zM1700.7 66.7h4.2v1h-4.2z" fill="#e6e9ef"/>
<path d="M1877 49.5 l7 7 l7 -7" fill="none" stroke="#4b5563" stroke-width="2.2" stroke-linecap="round" stroke-linejoin="round"/>
<g transform="translate(79.00,198.30) scale(2.0833)" fill="none" stroke="#d8601f" stroke-width="2" stroke-linecap="round" stroke-linejoin="round"><path d="m16 16 3-8 3 8c-.87.65-1.92 1-3 1s-2.13-.35-3-1Z"/><path d="m2 16 3-8 3 8c-.87.65-1.92 1-3 1s-2.130-.35-3-1Z"/><path d="M7 21h10"/><path d="M12 3v18"/><path d="M3 7h2c2 0 5-1 7-2 2 1 5 2 7 2h2"/></g>
<text x="155.5" y="206.2" font-size="22.6" fill="#6b7280" textLength="132.0" lengthAdjust="spacingAndGlyphs">Total Weight</text>
<text x="155.0" y="252.4" font-size="40" fill="#111827" font-weight="bold" textLength="172.0" lengthAdjust="spacingAndGlyphs">6015.69 t</text>
<g transform="translate(548.40,198.30) scale(2.0833)" fill="none" stroke="#d8601f" stroke-width="2" stroke-linecap="round" stroke-linejoin="round"><path d="M14 18V6a2 2 0 0 0-2-2H4a2 2 0 0 0-2 2v11a1 1 0 0 0 1 1h2"/><path d="M15 18H9"/><path d="M19 18h2a1 1 0 0 0 1-1v-3.65a1 1 0 0 0-.22-.624l-3.48-4.35A1 1 0 0 0 17.52 8H14"/><circle cx="17" cy="18" r="2"/><circle cx="7" cy="18" r="2"/></g>
<text x="624.9" y="206.2" font-size="22.6" fill="#6b7280" textLength="131.2" lengthAdjust="spacingAndGlyphs">Total Dumps</text>
<text x="624.4" y="252.4" font-size="40" fill="#111827" font-weight="bold" textLength="126.2" lengthAdjust="spacingAndGlyphs">48,148</text>
<g transform="translate(1017.50,198.30) scale(2.0833)" fill="none" stroke="#d8601f" stroke-width="2" stroke-linecap="round" stroke-linejoin="round"><path d="m7.5 4.27 9 5.15"/><path d="M21 8a2 2 0 0 0-1-1.73l-7-4a2 2 0 0 0-2 0l-7 4A2 2 0 0 0 3 8v8a2 2 0 0 0 1 1.73l7 4a2 2 0 0 0 2 0l7-4A2 2 0 0 0 21 16Z"/><path d="m3.3 7 8.7 5 8.7-5"/><path d="M12 22V12"/></g>
<text x="1094.0" y="206.2" font-size="22.6" fill="#6b7280" textLength="115.0" lengthAdjust="spacingAndGlyphs">Total Items</text>
<text x="1093.5" y="252.4" font-size="40" fill="#111827" font-weight="bold" textLength="158.0" lengthAdjust="spacingAndGlyphs">644,328</text>
<g transform="translate(1486.90,198.30) scale(2.0833)" fill="none" stroke="#d8601f" stroke-width="2" stroke-linecap="round" stroke-linejoin="round"><circle cx="12" cy="12" r="10"/><circle cx="12" cy="12" r="6"/><circle cx="12" cy="12" r="2"/></g>
<text x="1563.4" y="206.2" font-size="22.6" fill="#6b7280" textLength="230.0" lengthAdjust="spacingAndGlyphs">Avg Weight per Dump</text>
<text x="1561.4" y="252.4" font-size="40" fill="#111827" font-weight="bold" textLength="183.4" lengthAdjust="spacingAndGlyphs">124.94 kg</text>
<g fill="none" stroke="#d8601f" stroke-width="2.6" stroke-linecap="round" stroke-linejoin="round"><path d="M55.3 425.8 L68.4 432.4 L55.3 439 L42.4 432.4 Z"/><path d="M42.2 440 L55.3 445.8 L68.4 440"/><path d="M42.2 446.4 L55.3 452.1 L68.4 446.4"/></g>
<text x="84.0" y="448.8" font-size="29" fill="#111827" font-weight="bold" textLength="267.0" lengthAdjust="spacingAndGlyphs">Waste Type Trends</text>
<path d="M1855 443 l8 -8 l8 8" fill="none" stroke="#374151" stroke-width="2.4" stroke-linecap="round" stroke-linejoin="round"/>
<text x="40.0" y="527.5" font-size="26" fill="#111827" font-weight="bold" textLength="304.0" lengthAdjust="spacingAndGlyphs">Daily Waste Composition</text>
<text x="40.0" y="566.9" font-size="22" fill="#4b5563" textLength="635.0" lengthAdjust="spacingAndGlyphs">Stacked bar chart showing waste type composition over time</text>
<rect x="1644.5" y="624.5" width="23" height="23.5" rx="4.5" fill="#ffffff" stroke="#c9ced6" stroke-width="1.3"/>
<text x="1681.5" y="644.0" font-size="23" fill="#374151" textLength="176.0" lengthAdjust="spacingAndGlyphs" stroke="#374151" stroke-width="0.15">Show Trendlines</text>
<line x1="150" y1="947.1" x2="1752" y2="947.1" stroke="#e3e5ea" stroke-width="1.2" stroke-dasharray="3.8 5.3"/>
<line x1="150" y1="869.2" x2="1752" y2="869.2" stroke="#e3e5ea" stroke-width="1.2" stroke-dasharray="3.8 5.3"/>
<line x1="150" y1="791.3" x2="1752" y2="791.3" stroke="#e3e5ea" stroke-width="1.2" stroke-dasharray="3.8 5.3"/>
<line x1="150" y1="713.4" x2="1752" y2="713.4" stroke="#e3e5ea" stroke-width="1.2" stroke-dasharray="3.8 5.3"/>
<line x1="213.4" y1="714" x2="213.4" y2="1025" stroke="#e6e8ed" stroke-width="1" stroke-dasharray="3.8 5.6"/>
<line x1="442.5" y1="714" x2="442.5" y2="1025" stroke="#e6e8ed" stroke-width="1" stroke-dasharray="3.8 5.6"/>
<line x1="1130" y1="714" x2="1130" y2="1025" stroke="#e6e8ed" stroke-width="1" stroke-dasharray="3.8 5.6"/>
<line x1="1358.4" y1="714" x2="1358.4" y2="1025" stroke="#e6e8ed" stroke-width="1" stroke-dasharray="3.8 5.6"/>
<line x1="1434.5" y1="714" x2="1434.5" y2="1025" stroke="#e6e8ed" stroke-width="1" stroke-dasharray="3.8 5.6"/>
<line x1="1511" y1="714" x2="1511" y2="1025" stroke="#e6e8ed" stroke-width="1" stroke-dasharray="3.8 5.6"/>
<line x1="1587" y1="714" x2="1587" y2="1025" stroke="#e6e8ed" stroke-width="1" stroke-dasharray="3.8 5.6"/>
<line x1="1663.7" y1="714" x2="1663.7" y2="1025" stroke="#e6e8ed" stroke-width="1" stroke-dasharray="3.8 5.6"/>
<line x1="1752.5" y1="714" x2="1752.5" y2="1025" stroke="#e6e8ed" stroke-width="1" stroke-dasharray="3.8 5.6"/>
<rect x="152.60" y="939.00" width="18.9" height="86.05" fill="#4f80ea"/>
<rect x="152.60" y="935.30" width="18.9" height="3.75" fill="#db524b"/>
<rect x="152.60" y="921.00" width="18.9" height="14.35" fill="#58b585"/>
<rect x="152.60" y="918.00" width="18.9" height="3.05" fill="#e9a236"/>
<rect x="152.60" y="915.90" width="18.9" height="2.15" fill="#dd559b"/>
<rect x="152.60" y="913.80" width="18.9" height="2.15" fill="#55b0d5"/>
<rect x="152.60" y="911.70" width="18.9" height="2.15" fill="#e9a236"/>
<rect x="152.60" y="909.60" width="18.9" height="2.15" fill="#58b585"/>
<rect x="152.60" y="907.50" width="18.9" height="2.15" fill="#8458ef"/>
<rect x="152.60" y="903.00" width="18.9" height="4.55" fill="#8dc73c"/>
<rect x="152.60" y="887.20" width="18.9" height="15.85" fill="#db524b"/>
<rect x="152.60" y="873.10" width="18.9" height="14.15" fill="#58b585"/>
<rect x="152.60" y="869.90" width="18.9" height="3.25" fill="#e9a236"/>
<rect x="152.60" y="868.60" width="18.9" height="1.35" fill="#8458ef"/>
<rect x="178.04" y="962.90" width="18.9" height="62.15" fill="#4f80ea"/>
<rect x="178.04" y="957.70" width="18.9" height="5.25" fill="#db524b"/>
<rect x="178.04" y="931.80" width="18.9" height="25.95" fill="#58b585"/>
<rect x="178.04" y="925.70" width="18.9" height="6.15" fill="#e9a236"/>
<rect x="178.04" y="923.57" width="18.9" height="2.18" fill="#dd559b"/>
<rect x="178.04" y="921.43" width="18.9" height="2.18" fill="#55b0d5"/>
<rect x="178.04" y="919.30" width="18.9" height="2.18" fill="#8dc73c"/>
<rect x="178.04" y="917.17" width="18.9" height="2.18" fill="#db524b"/>
<rect x="178.04" y="915.03" width="18.9" height="2.18" fill="#58b585"/>
<rect x="178.04" y="912.90" width="18.9" height="2.18" fill="#e9a236"/>
<rect x="178.04" y="910.00" width="18.9" height="2.95" fill="#8458ef"/>
<rect x="178.04" y="903.00" width="18.9" height="7.05" fill="#8dc73c"/>
<rect x="178.04" y="888.10" width="18.9" height="14.95" fill="#db524b"/>
<rect x="178.04" y="872.40" width="18.9" height="15.75" fill="#58b585"/>
<rect x="203.48" y="925.00" width="18.9" height="100.05" fill="#4f80ea"/>
<rect x="203.48" y="919.90" width="18.9" height="5.15" fill="#db524b"/>
<rect x="203.48" y="903.00" width="18.9" height="16.95" fill="#58b585"/>
<rect x="203.48" y="900.00" width="18.9" height="3.05" fill="#e9a236"/>
<rect x="203.48" y="897.92" width="18.9" height="2.12" fill="#dd559b"/>
<rect x="203.48" y="895.85" width="18.9" height="2.12" fill="#55b0d5"/>
<rect x="203.48" y="893.78" width="18.9" height="2.12" fill="#db524b"/>
<rect x="203.48" y="891.70" width="18.9" height="2.12" fill="#58b585"/>
<rect x="203.48" y="889.80" width="18.9" height="1.95" fill="#e9a236"/>
<rect x="203.48" y="887.20" width="18.9" height="2.65" fill="#8458ef"/>
<rect x="203.48" y="883.60" width="18.9" height="3.65" fill="#8dc73c"/>
<rect x="203.48" y="872.80" width="18.9" height="10.85" fill="#db524b"/>
<rect x="203.48" y="857.00" width="18.9" height="15.85" fill="#58b585"/>
<rect x="228.92" y="911.60" width="18.9" height="113.45" fill="#4f80ea"/>
<rect x="228.92" y="908.70" width="18.9" height="2.95" fill="#db524b"/>
<rect x="228.92" y="895.50" width="18.9" height="13.25" fill="#58b585"/>
<rect x="228.92" y="892.30" width="18.9" height="3.25" fill="#e9a236"/>
<rect x="228.92" y="890.20" width="18.9" height="2.15" fill="#dd559b"/>
<rect x="228.92" y="888.10" width="18.9" height="2.15" fill="#58b585"/>
<rect x="228.92" y="886.00" width="18.9" height="2.15" fill="#55b0d5"/>
<rect x="228.92" y="883.00" width="18.9" height="3.05" fill="#8458ef"/>
<rect x="228.92" y="880.50" width="18.9" height="2.55" fill="#8dc73c"/>
<rect x="228.92" y="875.40" width="18.9" height="5.15" fill="#db524b"/>
<rect x="228.92" y="868.30" width="18.9" height="7.15" fill="#58b585"/>
<rect x="305.24" y="995.00" width="18.9" height="30.05" fill="#4f80ea"/>
<rect x="305.24" y="991.40" width="18.9" height="3.65" fill="#db524b"/>
<rect x="305.24" y="976.80" width="18.9" height="14.65" fill="#58b585"/>
<rect x="305.24" y="972.90" width="18.9" height="3.95" fill="#e9a236"/>
<rect x="305.24" y="971.40" width="18.9" height="1.55" fill="#dd559b"/>
<rect x="305.24" y="969.80" width="18.9" height="1.65" fill="#55b0d5"/>
<rect x="305.24" y="968.30" width="18.9" height="1.55" fill="#8458ef"/>
<rect x="305.24" y="966.80" width="18.9" height="1.55" fill="#58b585"/>
<rect x="305.24" y="964.70" width="18.9" height="2.15" fill="#e9a236"/>
<rect x="305.24" y="962.60" width="18.9" height="2.15" fill="#8458ef"/>
<rect x="305.24" y="958.00" width="18.9" height="4.65" fill="#8dc73c"/>
<rect x="330.68" y="883.20" width="18.9" height="141.85" fill="#4f80ea"/>
<rect x="330.68" y="876.00" width="18.9" height="7.25" fill="#db524b"/>
<rect x="330.68" y="853.30" width="18.9" height="22.75" fill="#58b585"/>
<rect x="330.68" y="848.50" width="18.9" height="4.85" fill="#e9a236"/>
<rect x="330.68" y="846.40" width="18.9" height="2.15" fill="#8458ef"/>
<rect x="330.68" y="844.30" width="18.9" height="2.15" fill="#dd559b"/>
<rect x="330.68" y="842.20" width="18.9" height="2.15" fill="#8dc73c"/>
<rect x="330.68" y="840.10" width="18.9" height="2.15" fill="#55b0d5"/>
<rect x="330.68" y="838.00" width="18.9" height="2.15" fill="#db524b"/>
<rect x="330.68" y="835.90" width="18.9" height="2.15" fill="#e9a236"/>
<rect x="330.68" y="833.80" width="18.9" height="2.15" fill="#8458ef"/>
<rect x="330.68" y="826.30" width="18.9" height="7.55" fill="#8dc73c"/>
<rect x="330.68" y="817.40" width="18.9" height="8.95" fill="#db524b"/>
<rect x="330.68" y="809.40" width="18.9" height="8.05" fill="#58b585"/>
<rect x="330.68" y="806.90" width="18.9" height="2.55" fill="#e9a236"/>
<rect x="330.68" y="805.80" width="18.9" height="1.15" fill="#8458ef"/>
<rect x="356.12" y="944.00" width="18.9" height="81.05" fill="#4f80ea"/>
<rect x="356.12" y="936.30" width="18.9" height="7.75" fill="#db524b"/>
<rect x="356.12" y="902.60" width="18.9" height="33.75" fill="#58b585"/>
<rect x="356.12" y="893.60" width="18.9" height="9.05" fill="#e9a236"/>
<rect x="356.12" y="891.50" width="18.9" height="2.15" fill="#dd559b"/>
<rect x="356.12" y="889.40" width="18.9" height="2.15" fill="#55b0d5"/>
<rect x="356.12" y="887.30" width="18.9" height="2.15" fill="#8dc73c"/>
<rect x="356.12" y="885.20" width="18.9" height="2.15" fill="#4f80ea"/>
<rect x="356.12" y="883.10" width="18.9" height="2.15" fill="#db524b"/>
<rect x="356.12" y="881.00" width="18.9" height="2.15" fill="#58b585"/>
<rect x="356.12" y="876.00" width="18.9" height="5.05" fill="#e9a236"/>
<rect x="356.12" y="870.50" width="18.9" height="5.55" fill="#8458ef"/>
<rect x="356.12" y="861.00" width="18.9" height="9.55" fill="#8dc73c"/>
<rect x="356.12" y="849.50" width="18.9" height="11.55" fill="#db524b"/>
<rect x="356.12" y="839.00" width="18.9" height="10.55" fill="#58b585"/>
<rect x="381.56" y="842.30" width="18.9" height="182.75" fill="#4f80ea"/>
<rect x="381.56" y="835.60" width="18.9" height="6.75" fill="#db524b"/>
<rect x="381.56" y="811.80" width="18.9" height="23.85" fill="#58b585"/>
<rect x="381.56" y="806.10" width="18.9" height="5.75" fill="#e9a236"/>
<rect x="381.56" y="803.97" width="18.9" height="2.18" fill="#8458ef"/>
<rect x="381.56" y="801.84" width="18.9" height="2.18" fill="#dd559b"/>
<rect x="381.56" y="799.71" width="18.9" height="2.18" fill="#8dc73c"/>
<rect x="381.56" y="797.59" width="18.9" height="2.18" fill="#4f80ea"/>
<rect x="381.56" y="795.46" width="18.9" height="2.18" fill="#db524b"/>
<rect x="381.56" y="793.33" width="18.9" height="2.18" fill="#58b585"/>
<rect x="381.56" y="791.20" width="18.9" height="2.18" fill="#e9a236"/>
<rect x="381.56" y="788.20" width="18.9" height="3.05" fill="#8458ef"/>
<rect x="381.56" y="783.00" width="18.9" height="5.25" fill="#8dc73c"/>
<rect x="381.56" y="778.20" width="18.9" height="4.85" fill="#db524b"/>
<rect x="381.56" y="771.00" width="18.9" height="7.25" fill="#58b585"/>
<rect x="407.00" y="864.20" width="18.9" height="160.85" fill="#4f80ea"/>
<rect x="407.00" y="859.20" width="18.9" height="5.05" fill="#db524b"/>
<rect x="407.00" y="833.10" width="18.9" height="26.15" fill="#58b585"/>
<rect x="407.00" y="827.80" width="18.9" height="5.35" fill="#e9a236"/>
<rect x="407.00" y="825.57" width="18.9" height="2.28" fill="#8458ef"/>
<rect x="407.00" y="823.33" width="18.9" height="2.28" fill="#dd559b"/>
<rect x="407.00" y="821.10" width="18.9" height="2.28" fill="#8dc73c"/>
<rect x="407.00" y="818.87" width="18.9" height="2.28" fill="#4f80ea"/>
<rect x="407.00" y="816.63" width="18.9" height="2.28" fill="#db524b"/>
<rect x="407.00" y="814.40" width="18.9" height="2.28" fill="#58b585"/>
<rect x="407.00" y="813.70" width="18.9" height="0.75" fill="#e9a236"/>
<rect x="407.00" y="809.10" width="18.9" height="4.65" fill="#8458ef"/>
<rect x="407.00" y="804.20" width="18.9" height="4.95" fill="#8dc73c"/>
<rect x="407.00" y="796.70" width="18.9" height="7.55" fill="#db524b"/>
<rect x="407.00" y="788.20" width="18.9" height="8.55" fill="#58b585"/>
<rect x="407.00" y="786.00" width="18.9" height="2.25" fill="#e9a236"/>
<rect x="407.00" y="784.70" width="18.9" height="1.35" fill="#8458ef"/>
<rect x="483.32" y="957.70" width="18.9" height="67.35" fill="#4f80ea"/>
<rect x="483.32" y="951.00" width="18.9" height="6.75" fill="#db524b"/>
<rect x="483.32" y="923.30" width="18.9" height="27.75" fill="#58b585"/>
<rect x="483.32" y="917.10" width="18.9" height="6.25" fill="#e9a236"/>
<rect x="483.32" y="914.92" width="18.9" height="2.23" fill="#dd559b"/>
<rect x="483.32" y="912.73" width="18.9" height="2.23" fill="#8dc73c"/>
<rect x="483.32" y="910.55" width="18.9" height="2.23" fill="#55b0d5"/>
<rect x="483.32" y="908.37" width="18.9" height="2.23" fill="#4f80ea"/>
<rect x="483.32" y="906.18" width="18.9" height="2.23" fill="#db524b"/>
<rect x="483.32" y="904.00" width="18.9" height="2.23" fill="#58b585"/>
<rect x="483.32" y="899.20" width="18.9" height="4.85" fill="#e9a236"/>
<rect x="483.32" y="895.10" width="18.9" height="4.15" fill="#8458ef"/>
<rect x="483.32" y="888.80" width="18.9" height="6.35" fill="#8dc73c"/>
<rect x="483.32" y="880.90" width="18.9" height="7.95" fill="#db524b"/>
<rect x="483.32" y="872.10" width="18.9" height="8.85" fill="#58b585"/>
<rect x="508.76" y="876.60" width="18.9" height="148.45" fill="#4f80ea"/>
<rect x="508.76" y="871.00" width="18.9" height="5.65" fill="#db524b"/>
<rect x="508.76" y="853.60" width="18.9" height="17.45" fill="#58b585"/>
<rect x="508.76" y="849.40" width="18.9" height="4.25" fill="#e9a236"/>
<rect x="508.76" y="847.43" width="18.9" height="2.02" fill="#8458ef"/>
<rect x="508.76" y="845.47" width="18.9" height="2.02" fill="#dd559b"/>
<rect x="508.76" y="843.50" width="18.9" height="2.02" fill="#8dc73c"/>
<rect x="508.76" y="841.53" width="18.9" height="2.02" fill="#55b0d5"/>
<rect x="508.76" y="839.57" width="18.9" height="2.02" fill="#4f80ea"/>
<rect x="508.76" y="837.60" width="18.9" height="2.02" fill="#e9a236"/>
<rect x="508.76" y="835.30" width="18.9" height="2.35" fill="#8458ef"/>
<rect x="508.76" y="831.90" width="18.9" height="3.45" fill="#8dc73c"/>
<rect x="508.76" y="815.60" width="18.9" height="16.35" fill="#db524b"/>
<rect x="508.76" y="799.60" width="18.9" height="16.05" fill="#58b585"/>
<rect x="508.76" y="794.60" width="18.9" height="5.05" fill="#e9a236"/>
<rect x="508.76" y="792.60" width="18.9" height="2.05" fill="#8458ef"/>
<rect x="508.76" y="790.80" width="18.9" height="1.85" fill="#db524b"/>
<rect x="534.20" y="961.30" width="18.9" height="63.75" fill="#4f80ea"/>
<rect x="534.20" y="955.00" width="18.9" height="6.35" fill="#db524b"/>
<rect x="534.20" y="924.00" width="18.9" height="31.05" fill="#58b585"/>
<rect x="534.20" y="916.10" width="18.9" height="7.95" fill="#e9a236"/>
<rect x="534.20" y="914.22" width="18.9" height="1.93" fill="#dd559b"/>
<rect x="534.20" y="912.34" width="18.9" height="1.93" fill="#8dc73c"/>
<rect x="534.20" y="910.46" width="18.9" height="1.93" fill="#4f80ea"/>
<rect x="534.20" y="908.58" width="18.9" height="1.93" fill="#db524b"/>
<rect x="534.20" y="906.70" width="18.9" height="1.93" fill="#58b585"/>
<rect x="534.20" y="901.60" width="18.9" height="5.15" fill="#e9a236"/>
<rect x="534.20" y="897.20" width="18.9" height="4.45" fill="#8458ef"/>
<rect x="534.20" y="887.00" width="18.9" height="10.25" fill="#8dc73c"/>
<rect x="534.20" y="873.20" width="18.9" height="13.85" fill="#db524b"/>
<rect x="534.20" y="857.50" width="18.9" height="15.75" fill="#58b585"/>
<rect x="534.20" y="855.90" width="18.9" height="1.65" fill="#db524b"/>
<rect x="559.64" y="872.80" width="18.9" height="152.25" fill="#4f80ea"/>
<rect x="559.64" y="868.00" width="18.9" height="4.85" fill="#db524b"/>
<rect x="559.64" y="848.70" width="18.9" height="19.35" fill="#58b585"/>
<rect x="559.64" y="843.70" width="18.9" height="5.05" fill="#e9a236"/>
<rect x="559.64" y="841.50" width="18.9" height="2.25" fill="#dd559b"/>
<rect x="559.64" y="839.30" width="18.9" height="2.25" fill="#8458ef"/>
<rect x="559.64" y="837.10" width="18.9" height="2.25" fill="#55b0d5"/>
<rect x="559.64" y="834.90" width="18.9" height="2.25" fill="#58b585"/>
<rect x="559.64" y="831.20" width="18.9" height="3.75" fill="#e9a236"/>
<rect x="559.64" y="829.00" width="18.9" height="2.25" fill="#8458ef"/>
<rect x="559.64" y="826.10" width="18.9" height="2.95" fill="#8dc73c"/>
<rect x="559.64" y="813.60" width="18.9" height="12.55" fill="#db524b"/>
<rect x="559.64" y="801.00" width="18.9" height="12.65" fill="#58b585"/>
<rect x="559.64" y="799.60" width="18.9" height="1.45" fill="#db524b"/>
<rect x="585.08" y="889.00" width="18.9" height="136.05" fill="#4f80ea"/>
<rect x="585.08" y="883.40" width="18.9" height="5.65" fill="#db524b"/>
<rect x="585.08" y="858.80" width="18.9" height="24.65" fill="#58b585"/>
<rect x="585.08" y="853.20" width="18.9" height="5.65" fill="#e9a236"/>
<rect x="585.08" y="851.38" width="18.9" height="1.87" fill="#8458ef"/>
<rect x="585.08" y="849.57" width="18.9" height="1.87" fill="#dd559b"/>
<rect x="585.08" y="847.75" width="18.9" height="1.87" fill="#8dc73c"/>
<rect x="585.08" y="845.93" width="18.9" height="1.87" fill="#4f80ea"/>
<rect x="585.08" y="844.12" width="18.9" height="1.87" fill="#db524b"/>
<rect x="585.08" y="842.30" width="18.9" height="1.87" fill="#58b585"/>
<rect x="585.08" y="840.00" width="18.9" height="2.35" fill="#e9a236"/>
<rect x="585.08" y="837.30" width="18.9" height="2.75" fill="#8458ef"/>
<rect x="585.08" y="831.50" width="18.9" height="5.85" fill="#8dc73c"/>
<rect x="585.08" y="823.80" width="18.9" height="7.75" fill="#db524b"/>
<rect x="585.08" y="815.90" width="18.9" height="7.95" fill="#58b585"/>
<rect x="585.08" y="813.60" width="18.9" height="2.35" fill="#e9a236"/>
<rect x="585.08" y="812.20" width="18.9" height="1.45" fill="#8458ef"/>
<rect x="585.08" y="810.90" width="18.9" height="1.35" fill="#db524b"/>
<rect x="661.40" y="1011.40" width="18.9" height="13.65" fill="#4f80ea"/>
<rect x="661.40" y="1009.90" width="18.9" height="1.55" fill="#db524b"/>
<rect x="661.40" y="1004.90" width="18.9" height="5.05" fill="#58b585"/>
<rect x="661.40" y="1003.50" width="18.9" height="1.45" fill="#e9a236"/>
<rect x="661.40" y="1001.90" width="18.9" height="1.65" fill="#8458ef"/>
<rect x="661.40" y="1000.30" width="18.9" height="1.65" fill="#e9a236"/>
<rect x="661.40" y="998.20" width="18.9" height="2.15" fill="#8dc73c"/>
<rect x="686.84" y="927.40" width="18.9" height="97.65" fill="#4f80ea"/>
<rect x="686.84" y="923.40" width="18.9" height="4.05" fill="#db524b"/>
<rect x="686.84" y="903.00" width="18.9" height="20.45" fill="#58b585"/>
<rect x="686.84" y="896.80" width="18.9" height="6.25" fill="#e9a236"/>
<rect x="686.84" y="895.20" width="18.9" height="1.65" fill="#dd559b"/>
<rect x="686.84" y="893.60" width="18.9" height="1.65" fill="#55b0d5"/>
<rect x="686.84" y="892.00" width="18.9" height="1.65" fill="#8dc73c"/>
<rect x="686.84" y="890.40" width="18.9" height="1.65" fill="#db524b"/>
<rect x="686.84" y="888.80" width="18.9" height="1.65" fill="#58b585"/>
<rect x="686.84" y="886.00" width="18.9" height="2.85" fill="#e9a236"/>
<rect x="686.84" y="883.60" width="18.9" height="2.45" fill="#8458ef"/>
<rect x="686.84" y="878.30" width="18.9" height="5.35" fill="#8dc73c"/>
<rect x="686.84" y="856.10" width="18.9" height="22.25" fill="#db524b"/>
<rect x="686.84" y="837.70" width="18.9" height="18.45" fill="#58b585"/>
<rect x="686.84" y="830.60" width="18.9" height="7.15" fill="#e9a236"/>
<rect x="686.84" y="828.20" width="18.9" height="2.45" fill="#8458ef"/>
<rect x="686.84" y="826.50" width="18.9" height="1.75" fill="#db524b"/>
<rect x="712.28" y="945.30" width="18.9" height="79.75" fill="#4f80ea"/>
<rect x="712.28" y="939.60" width="18.9" height="5.75" fill="#db524b"/>
<rect x="712.28" y="911.30" width="18.9" height="28.35" fill="#58b585"/>
<rect x="712.28" y="905.60" width="18.9" height="5.75" fill="#e9a236"/>
<rect x="712.28" y="903.30" width="18.9" height="2.35" fill="#dd559b"/>
<rect x="712.28" y="901.00" width="18.9" height="2.35" fill="#8dc73c"/>
<rect x="712.28" y="898.70" width="18.9" height="2.35" fill="#4f80ea"/>
<rect x="712.28" y="896.40" width="18.9" height="2.35" fill="#db524b"/>
<rect x="712.28" y="894.10" width="18.9" height="2.35" fill="#58b585"/>
<rect x="712.28" y="890.20" width="18.9" height="3.95" fill="#e9a236"/>
<rect x="712.28" y="886.90" width="18.9" height="3.35" fill="#8458ef"/>
<rect x="712.28" y="879.00" width="18.9" height="7.95" fill="#8dc73c"/>
<rect x="712.28" y="863.40" width="18.9" height="15.65" fill="#db524b"/>
<rect x="712.28" y="844.30" width="18.9" height="19.15" fill="#58b585"/>
<rect x="712.28" y="842.70" width="18.9" height="1.65" fill="#db524b"/>
<rect x="737.72" y="918.50" width="18.9" height="106.55" fill="#4f80ea"/>
<rect x="737.72" y="914.60" width="18.9" height="3.95" fill="#db524b"/>
<rect x="737.72" y="898.10" width="18.9" height="16.55" fill="#58b585"/>
<rect x="737.72" y="892.10" width="18.9" height="6.05" fill="#e9a236"/>
<rect x="737.72" y="889.98" width="18.9" height="2.17" fill="#dd559b"/>
<rect x="737.72" y="887.85" width="18.9" height="2.17" fill="#55b0d5"/>
<rect x="737.72" y="885.73" width="18.9" height="2.17" fill="#db524b"/>
<rect x="737.72" y="883.60" width="18.9" height="2.17" fill="#58b585"/>
<rect x="737.72" y="881.60" width="18.9" height="2.05" fill="#e9a236"/>
<rect x="737.72" y="879.00" width="18.9" height="2.65" fill="#8458ef"/>
<rect x="737.72" y="875.00" width="18.9" height="4.05" fill="#8dc73c"/>
<rect x="737.72" y="859.20" width="18.9" height="15.85" fill="#db524b"/>
<rect x="737.72" y="841.00" width="18.9" height="18.25" fill="#58b585"/>
<rect x="737.72" y="839.40" width="18.9" height="1.65" fill="#db524b"/>
<rect x="763.16" y="925.10" width="18.9" height="99.95" fill="#4f80ea"/>
<rect x="763.16" y="922.10" width="18.9" height="3.05" fill="#db524b"/>
<rect x="763.16" y="901.60" width="18.9" height="20.55" fill="#58b585"/>
<rect x="763.16" y="898.10" width="18.9" height="3.55" fill="#e9a236"/>
<rect x="763.16" y="895.77" width="18.9" height="2.38" fill="#dd559b"/>
<rect x="763.16" y="893.45" width="18.9" height="2.38" fill="#55b0d5"/>
<rect x="763.16" y="891.12" width="18.9" height="2.38" fill="#db524b"/>
<rect x="763.16" y="888.80" width="18.9" height="2.38" fill="#e9a236"/>
<rect x="763.16" y="886.90" width="18.9" height="1.95" fill="#8458ef"/>
<rect x="763.16" y="882.50" width="18.9" height="4.45" fill="#8dc73c"/>
<rect x="763.16" y="872.10" width="18.9" height="10.45" fill="#db524b"/>
<rect x="763.16" y="862.70" width="18.9" height="9.45" fill="#58b585"/>
<rect x="763.16" y="859.20" width="18.9" height="3.55" fill="#e9a236"/>
<rect x="763.16" y="857.20" width="18.9" height="2.05" fill="#8458ef"/>
<rect x="763.16" y="855.90" width="18.9" height="1.35" fill="#db524b"/>
<rect x="788.60" y="1007.70" width="18.9" height="17.35" fill="#db524b"/>
<rect x="788.60" y="988.50" width="18.9" height="19.25" fill="#58b585"/>
<rect x="788.60" y="988.10" width="18.9" height="0.45" fill="#db524b"/>
<rect x="839.48" y="973.70" width="18.9" height="51.35" fill="#4f80ea"/>
<rect x="839.48" y="969.10" width="18.9" height="4.65" fill="#db524b"/>
<rect x="839.48" y="947.00" width="18.9" height="22.15" fill="#58b585"/>
<rect x="839.48" y="942.30" width="18.9" height="4.75" fill="#e9a236"/>
<rect x="839.48" y="939.80" width="18.9" height="2.55" fill="#dd559b"/>
<rect x="839.48" y="937.30" width="18.9" height="2.55" fill="#8dc73c"/>
<rect x="839.48" y="934.80" width="18.9" height="2.55" fill="#4f80ea"/>
<rect x="839.48" y="932.30" width="18.9" height="2.55" fill="#58b585"/>
<rect x="839.48" y="928.80" width="18.9" height="3.55" fill="#e9a236"/>
<rect x="839.48" y="926.90" width="18.9" height="1.95" fill="#8458ef"/>
<rect x="839.48" y="920.80" width="18.9" height="6.15" fill="#8dc73c"/>
<rect x="839.48" y="912.90" width="18.9" height="7.95" fill="#db524b"/>
<rect x="839.48" y="903.30" width="18.9" height="9.65" fill="#58b585"/>
<rect x="839.48" y="901.70" width="18.9" height="1.65" fill="#db524b"/>
<rect x="864.92" y="903.60" width="18.9" height="121.45" fill="#4f80ea"/>
<rect x="864.92" y="899.60" width="18.9" height="4.05" fill="#db524b"/>
<rect x="864.92" y="879.60" width="18.9" height="20.05" fill="#58b585"/>
<rect x="864.92" y="875.50" width="18.9" height="4.15" fill="#e9a236"/>
<rect x="864.92" y="873.15" width="18.9" height="2.40" fill="#dd559b"/>
<rect x="864.92" y="870.80" width="18.9" height="2.40" fill="#58b585"/>
<rect x="864.92" y="868.45" width="18.9" height="2.40" fill="#db524b"/>
<rect x="864.92" y="866.10" width="18.9" height="2.40" fill="#e9a236"/>
<rect x="864.92" y="864.30" width="18.9" height="1.85" fill="#8458ef"/>
<rect x="864.92" y="859.70" width="18.9" height="4.65" fill="#8dc73c"/>
<rect x="864.92" y="843.10" width="18.9" height="16.65" fill="#db524b"/>
<rect x="864.92" y="827.70" width="18.9" height="15.45" fill="#58b585"/>
<rect x="864.92" y="821.90" width="18.9" height="5.85" fill="#e9a236"/>
<rect x="864.92" y="819.70" width="18.9" height="2.25" fill="#8458ef"/>
<rect x="864.92" y="817.70" width="18.9" height="2.05" fill="#db524b"/>
<rect x="890.36" y="961.20" width="18.9" height="63.85" fill="#4f80ea"/>
<rect x="890.36" y="954.70" width="18.9" height="6.55" fill="#db524b"/>
<rect x="890.36" y="907.30" width="18.9" height="47.45" fill="#58b585"/>
<rect x="890.36" y="903.80" width="18.9" height="3.55" fill="#e9a236"/>
<rect x="890.36" y="902.02" width="18.9" height="1.82" fill="#8458ef"/>
<rect x="890.36" y="900.25" width="18.9" height="1.82" fill="#8dc73c"/>
<rect x="890.36" y="898.48" width="18.9" height="1.82" fill="#dd559b"/>
<rect x="890.36" y="896.70" width="18.9" height="1.82" fill="#58b585"/>
<rect x="890.36" y="890.80" width="18.9" height="5.95" fill="#e9a236"/>
<rect x="890.36" y="885.50" width="18.9" height="5.35" fill="#8458ef"/>
<rect x="890.36" y="867.10" width="18.9" height="18.45" fill="#8dc73c"/>
<rect x="890.36" y="849.40" width="18.9" height="17.75" fill="#db524b"/>
<rect x="890.36" y="832.50" width="18.9" height="16.95" fill="#58b585"/>
<rect x="890.36" y="830.60" width="18.9" height="1.95" fill="#db524b"/>
<rect x="915.80" y="906.10" width="18.9" height="118.95" fill="#4f80ea"/>
<rect x="915.80" y="902.30" width="18.9" height="3.85" fill="#db524b"/>
<rect x="915.80" y="886.70" width="18.9" height="15.65" fill="#58b585"/>
<rect x="915.80" y="883.00" width="18.9" height="3.75" fill="#e9a236"/>
<rect x="915.80" y="880.88" width="18.9" height="2.17" fill="#8458ef"/>
<rect x="915.80" y="878.76" width="18.9" height="2.17" fill="#8dc73c"/>
<rect x="915.80" y="876.64" width="18.9" height="2.17" fill="#4f80ea"/>
<rect x="915.80" y="874.52" width="18.9" height="2.17" fill="#58b585"/>
<rect x="915.80" y="872.40" width="18.9" height="2.17" fill="#e9a236"/>
<rect x="915.80" y="868.60" width="18.9" height="3.85" fill="#8dc73c"/>
<rect x="915.80" y="855.90" width="18.9" height="12.75" fill="#db524b"/>
<rect x="915.80" y="840.60" width="18.9" height="15.35" fill="#58b585"/>
<rect x="915.80" y="838.10" width="18.9" height="2.55" fill="#db524b"/>
<rect x="941.24" y="910.80" width="18.9" height="114.25" fill="#4f80ea"/>
<rect x="941.24" y="907.10" width="18.9" height="3.75" fill="#db524b"/>
<rect x="941.24" y="888.00" width="18.9" height="19.15" fill="#58b585"/>
<rect x="941.24" y="883.00" width="18.9" height="5.05" fill="#e9a236"/>
<rect x="941.24" y="880.98" width="18.9" height="2.08" fill="#dd559b"/>
<rect x="941.24" y="878.95" width="18.9" height="2.08" fill="#8dc73c"/>
<rect x="941.24" y="876.92" width="18.9" height="2.08" fill="#4f80ea"/>
<rect x="941.24" y="874.90" width="18.9" height="2.08" fill="#58b585"/>
<rect x="941.24" y="872.10" width="18.9" height="2.85" fill="#e9a236"/>
<rect x="941.24" y="868.90" width="18.9" height="3.25" fill="#8458ef"/>
<rect x="941.24" y="862.70" width="18.9" height="6.25" fill="#8dc73c"/>
<rect x="941.24" y="854.70" width="18.9" height="8.05" fill="#db524b"/>
<rect x="941.24" y="846.20" width="18.9" height="8.55" fill="#58b585"/>
<rect x="941.24" y="843.10" width="18.9" height="3.15" fill="#e9a236"/>
<rect x="941.24" y="841.80" width="18.9" height="1.35" fill="#8458ef"/>
<rect x="941.24" y="840.20" width="18.9" height="1.65" fill="#db524b"/>
<rect x="966.68" y="1019.90" width="18.9" height="5.15" fill="#4f80ea"/>
<rect x="966.68" y="1019.00" width="18.9" height="0.95" fill="#db524b"/>
<rect x="966.68" y="1016.20" width="18.9" height="2.85" fill="#58b585"/>
<rect x="966.68" y="1014.50" width="18.9" height="1.75" fill="#e9a236"/>
<rect x="966.68" y="1013.10" width="18.9" height="1.45" fill="#db524b"/>
<rect x="1017.56" y="965.60" width="18.9" height="59.45" fill="#4f80ea"/>
<rect x="1017.56" y="960.70" width="18.9" height="4.95" fill="#db524b"/>
<rect x="1017.56" y="935.00" width="18.9" height="25.75" fill="#58b585"/>
<rect x="1017.56" y="928.20" width="18.9" height="6.85" fill="#e9a236"/>
<rect x="1017.56" y="925.93" width="18.9" height="2.33" fill="#dd559b"/>
<rect x="1017.56" y="923.65" width="18.9" height="2.33" fill="#8dc73c"/>
<rect x="1017.56" y="921.38" width="18.9" height="2.33" fill="#4f80ea"/>
<rect x="1017.56" y="919.10" width="18.9" height="2.33" fill="#db524b"/>
<rect x="1017.56" y="917.10" width="18.9" height="2.05" fill="#58b585"/>
<rect x="1017.56" y="913.40" width="18.9" height="3.75" fill="#e9a236"/>
<rect x="1017.56" y="911.00" width="18.9" height="2.45" fill="#8458ef"/>
<rect x="1017.56" y="902.60" width="18.9" height="8.45" fill="#8dc73c"/>
<rect x="1017.56" y="894.10" width="18.9" height="8.55" fill="#db524b"/>
<rect x="1017.56" y="885.00" width="18.9" height="9.15" fill="#58b585"/>
<rect x="1017.56" y="883.00" width="18.9" height="2.05" fill="#db524b"/>
<rect x="1043.00" y="920.10" width="18.9" height="104.95" fill="#4f80ea"/>
<rect x="1043.00" y="917.50" width="18.9" height="2.65" fill="#db524b"/>
<rect x="1043.00" y="901.90" width="18.9" height="15.65" fill="#58b585"/>
<rect x="1043.00" y="900.20" width="18.9" height="1.75" fill="#e9a236"/>
<rect x="1043.00" y="898.15" width="18.9" height="2.10" fill="#8458ef"/>
<rect x="1043.00" y="896.10" width="18.9" height="2.10" fill="#8dc73c"/>
<rect x="1043.00" y="894.05" width="18.9" height="2.10" fill="#dd559b"/>
<rect x="1043.00" y="892.00" width="18.9" height="2.10" fill="#e9a236"/>
<rect x="1043.00" y="888.60" width="18.9" height="3.45" fill="#8dc73c"/>
<rect x="1043.00" y="870.10" width="18.9" height="18.55" fill="#db524b"/>
<rect x="1043.00" y="853.10" width="18.9" height="17.05" fill="#58b585"/>
<rect x="1043.00" y="848.00" width="18.9" height="5.15" fill="#e9a236"/>
<rect x="1043.00" y="845.30" width="18.9" height="2.75" fill="#8458ef"/>
<rect x="1043.00" y="843.30" width="18.9" height="2.05" fill="#db524b"/>
<rect x="1068.44" y="957.10" width="18.9" height="67.95" fill="#4f80ea"/>
<rect x="1068.44" y="951.40" width="18.9" height="5.75" fill="#db524b"/>
<rect x="1068.44" y="920.50" width="18.9" height="30.95" fill="#58b585"/>
<rect x="1068.44" y="913.40" width="18.9" height="7.15" fill="#e9a236"/>
<rect x="1068.44" y="911.16" width="18.9" height="2.29" fill="#dd559b"/>
<rect x="1068.44" y="908.92" width="18.9" height="2.29" fill="#8dc73c"/>
<rect x="1068.44" y="906.68" width="18.9" height="2.29" fill="#4f80ea"/>
<rect x="1068.44" y="904.44" width="18.9" height="2.29" fill="#db524b"/>
<rect x="1068.44" y="902.20" width="18.9" height="2.29" fill="#58b585"/>
<rect x="1068.44" y="897.20" width="18.9" height="5.05" fill="#e9a236"/>
<rect x="1068.44" y="893.10" width="18.9" height="4.15" fill="#8458ef"/>
<rect x="1068.44" y="877.80" width="18.9" height="15.35" fill="#8dc73c"/>
<rect x="1068.44" y="858.20" width="18.9" height="19.65" fill="#db524b"/>
<rect x="1068.44" y="837.60" width="18.9" height="20.65" fill="#58b585"/>
<rect x="1068.44" y="835.40" width="18.9" height="2.25" fill="#db524b"/>
<rect x="1093.88" y="875.10" width="18.9" height="149.95" fill="#4f80ea"/>
<rect x="1093.88" y="870.60" width="18.9" height="4.55" fill="#db524b"/>
<rect x="1093.88" y="853.40" width="18.9" height="17.25" fill="#58b585"/>
<rect x="1093.88" y="848.70" width="18.9" height="4.75" fill="#e9a236"/>
<rect x="1093.88" y="847.00" width="18.9" height="1.75" fill="#dd559b"/>
<rect x="1093.88" y="845.30" width="18.9" height="1.75" fill="#8458ef"/>
<rect x="1093.88" y="843.60" width="18.9" height="1.75" fill="#8dc73c"/>
<rect x="1093.88" y="841.90" width="18.9" height="1.75" fill="#4f80ea"/>
<rect x="1093.88" y="840.20" width="18.9" height="1.75" fill="#db524b"/>
<rect x="1093.88" y="838.50" width="18.9" height="1.75" fill="#58b585"/>
<rect x="1093.88" y="836.20" width="18.9" height="2.35" fill="#e9a236"/>
<rect x="1093.88" y="834.50" width="18.9" height="1.75" fill="#8458ef"/>
<rect x="1093.88" y="830.10" width="18.9" height="4.45" fill="#8dc73c"/>
<rect x="1093.88" y="813.20" width="18.9" height="16.95" fill="#db524b"/>
<rect x="1093.88" y="792.90" width="18.9" height="20.35" fill="#58b585"/>
<rect x="1093.88" y="790.80" width="18.9" height="2.15" fill="#db524b"/>
<rect x="1119.32" y="898.50" width="18.9" height="126.55" fill="#4f80ea"/>
<rect x="1119.32" y="894.50" width="18.9" height="4.05" fill="#db524b"/>
<rect x="1119.32" y="872.40" width="18.9" height="22.15" fill="#58b585"/>
<rect x="1119.32" y="867.60" width="18.9" height="4.85" fill="#e9a236"/>
<rect x="1119.32" y="865.25" width="18.9" height="2.40" fill="#dd559b"/>
<rect x="1119.32" y="862.90" width="18.9" height="2.40" fill="#8dc73c"/>
<rect x="1119.32" y="860.55" width="18.9" height="2.40" fill="#4f80ea"/>
<rect x="1119.32" y="858.20" width="18.9" height="2.40" fill="#db524b"/>
<rect x="1119.32" y="856.80" width="18.9" height="1.45" fill="#58b585"/>
<rect x="1119.32" y="855.50" width="18.9" height="1.35" fill="#e9a236"/>
<rect x="1119.32" y="852.70" width="18.9" height="2.85" fill="#8458ef"/>
<rect x="1119.32" y="847.60" width="18.9" height="5.15" fill="#8dc73c"/>
<rect x="1119.32" y="829.70" width="18.9" height="17.95" fill="#db524b"/>
<rect x="1119.32" y="813.50" width="18.9" height="16.25" fill="#58b585"/>
<rect x="1119.32" y="808.30" width="18.9" height="5.25" fill="#e9a236"/>
<rect x="1119.32" y="805.60" width="18.9" height="2.75" fill="#8458ef"/>
<rect x="1119.32" y="803.00" width="18.9" height="2.65" fill="#db524b"/>
<rect x="1195.64" y="965.60" width="18.9" height="59.45" fill="#4f80ea"/>
<rect x="1195.64" y="961.10" width="18.9" height="4.55" fill="#db524b"/>
<rect x="1195.64" y="939.10" width="18.9" height="22.05" fill="#58b585"/>
<rect x="1195.64" y="934.90" width="18.9" height="4.25" fill="#e9a236"/>
<rect x="1195.64" y="933.14" width="18.9" height="1.81" fill="#dd559b"/>
<rect x="1195.64" y="931.38" width="18.9" height="1.81" fill="#55b0d5"/>
<rect x="1195.64" y="929.62" width="18.9" height="1.81" fill="#8dc73c"/>
<rect x="1195.64" y="927.86" width="18.9" height="1.81" fill="#4f80ea"/>
<rect x="1195.64" y="926.10" width="18.9" height="1.81" fill="#db524b"/>
<rect x="1195.64" y="924.10" width="18.9" height="2.05" fill="#58b585"/>
<rect x="1195.64" y="921.50" width="18.9" height="2.65" fill="#e9a236"/>
<rect x="1195.64" y="918.90" width="18.9" height="2.65" fill="#8458ef"/>
<rect x="1195.64" y="914.30" width="18.9" height="4.65" fill="#8dc73c"/>
<rect x="1195.64" y="906.00" width="18.9" height="8.35" fill="#db524b"/>
<rect x="1195.64" y="891.20" width="18.9" height="14.85" fill="#58b585"/>
<rect x="1195.64" y="888.40" width="18.9" height="2.85" fill="#db524b"/>
<rect x="1221.08" y="916.60" width="18.9" height="108.45" fill="#4f80ea"/>
<rect x="1221.08" y="911.70" width="18.9" height="4.95" fill="#db524b"/>
<rect x="1221.08" y="890.20" width="18.9" height="21.55" fill="#58b585"/>
<rect x="1221.08" y="886.90" width="18.9" height="3.35" fill="#e9a236"/>
<rect x="1221.08" y="885.04" width="18.9" height="1.91" fill="#dd559b"/>
<rect x="1221.08" y="883.18" width="18.9" height="1.91" fill="#8dc73c"/>
<rect x="1221.08" y="881.32" width="18.9" height="1.91" fill="#4f80ea"/>
<rect x="1221.08" y="879.46" width="18.9" height="1.91" fill="#db524b"/>
<rect x="1221.08" y="877.60" width="18.9" height="1.91" fill="#58b585"/>
<rect x="1221.08" y="876.30" width="18.9" height="1.35" fill="#e9a236"/>
<rect x="1221.08" y="873.90" width="18.9" height="2.45" fill="#8458ef"/>
<rect x="1221.08" y="865.70" width="18.9" height="8.25" fill="#8dc73c"/>
<rect x="1221.08" y="853.60" width="18.9" height="12.15" fill="#db524b"/>
<rect x="1221.08" y="844.80" width="18.9" height="8.85" fill="#58b585"/>
<rect x="1221.08" y="839.80" width="18.9" height="5.05" fill="#e9a236"/>
<rect x="1221.08" y="837.00" width="18.9" height="2.85" fill="#db524b"/>
<rect x="1246.52" y="926.10" width="18.9" height="98.95" fill="#4f80ea"/>
<rect x="1246.52" y="924.10" width="18.9" height="2.05" fill="#db524b"/>
<rect x="1246.52" y="915.30" width="18.9" height="8.85" fill="#58b585"/>
<rect x="1246.52" y="912.20" width="18.9" height="3.15" fill="#e9a236"/>
<rect x="1246.52" y="910.47" width="18.9" height="1.78" fill="#55b0d5"/>
<rect x="1246.52" y="908.73" width="18.9" height="1.78" fill="#dd559b"/>
<rect x="1246.52" y="907.00" width="18.9" height="1.78" fill="#e9a236"/>
<rect x="1246.52" y="905.70" width="18.9" height="1.35" fill="#8458ef"/>
<rect x="1246.52" y="903.60" width="18.9" height="2.15" fill="#8dc73c"/>
<rect x="1246.52" y="896.00" width="18.9" height="7.65" fill="#db524b"/>
<rect x="1246.52" y="888.40" width="18.9" height="7.65" fill="#58b585"/>
<rect x="1246.52" y="887.10" width="18.9" height="1.35" fill="#db524b"/>
<rect x="1271.96" y="967.20" width="18.9" height="57.85" fill="#4f80ea"/>
<rect x="1271.96" y="963.40" width="18.9" height="3.85" fill="#db524b"/>
<rect x="1271.96" y="937.80" width="18.9" height="25.65" fill="#58b585"/>
<rect x="1271.96" y="930.80" width="18.9" height="7.05" fill="#e9a236"/>
<rect x="1271.96" y="929.17" width="18.9" height="1.68" fill="#8458ef"/>
<rect x="1271.96" y="927.53" width="18.9" height="1.68" fill="#dd559b"/>
<rect x="1271.96" y="925.90" width="18.9" height="1.68" fill="#55b0d5"/>
<rect x="1271.96" y="924.27" width="18.9" height="1.68" fill="#8dc73c"/>
<rect x="1271.96" y="922.63" width="18.9" height="1.68" fill="#db524b"/>
<rect x="1271.96" y="921.00" width="18.9" height="1.68" fill="#58b585"/>
<rect x="1271.96" y="919.40" width="18.9" height="1.65" fill="#e9a236"/>
<rect x="1271.96" y="916.60" width="18.9" height="2.85" fill="#8458ef"/>
<rect x="1271.96" y="909.40" width="18.9" height="7.25" fill="#8dc73c"/>
<rect x="1271.96" y="904.40" width="18.9" height="5.05" fill="#db524b"/>
<rect x="1271.96" y="896.40" width="18.9" height="8.05" fill="#58b585"/>
<rect x="1271.96" y="893.90" width="18.9" height="2.55" fill="#db524b"/>
<rect x="1297.40" y="964.10" width="18.9" height="60.95" fill="#4f80ea"/>
<rect x="1297.40" y="963.20" width="18.9" height="0.95" fill="#e9a236"/>
<rect x="1322.84" y="1009.60" width="18.9" height="15.45" fill="#db524b"/>
<rect x="1322.84" y="991.20" width="18.9" height="18.45" fill="#58b585"/>
<rect x="1322.84" y="988.80" width="18.9" height="2.45" fill="#e9a236"/>
<rect x="1322.84" y="987.10" width="18.9" height="1.75" fill="#dd559b"/>
<rect x="1373.72" y="944.70" width="18.9" height="80.35" fill="#4f80ea"/>
<rect x="1373.72" y="937.80" width="18.9" height="6.95" fill="#db524b"/>
<rect x="1373.72" y="903.70" width="18.9" height="34.15" fill="#58b585"/>
<rect x="1373.72" y="896.50" width="18.9" height="7.25" fill="#e9a236"/>
<rect x="1373.72" y="894.06" width="18.9" height="2.49" fill="#dd559b"/>
<rect x="1373.72" y="891.62" width="18.9" height="2.49" fill="#55b0d5"/>
<rect x="1373.72" y="889.18" width="18.9" height="2.49" fill="#8dc73c"/>
<rect x="1373.72" y="886.74" width="18.9" height="2.49" fill="#4f80ea"/>
<rect x="1373.72" y="884.30" width="18.9" height="2.49" fill="#db524b"/>
<rect x="1373.72" y="882.90" width="18.9" height="1.45" fill="#58b585"/>
<rect x="1373.72" y="878.70" width="18.9" height="4.25" fill="#e9a236"/>
<rect x="1373.72" y="875.20" width="18.9" height="3.55" fill="#8458ef"/>
<rect x="1373.72" y="864.80" width="18.9" height="10.45" fill="#8dc73c"/>
<rect x="1373.72" y="852.60" width="18.9" height="12.25" fill="#db524b"/>
<rect x="1373.72" y="836.30" width="18.9" height="16.35" fill="#58b585"/>
<rect x="1373.72" y="834.20" width="18.9" height="2.15" fill="#db524b"/>
<rect x="1399.16" y="891.20" width="18.9" height="133.85" fill="#4f80ea"/>
<rect x="1399.16" y="886.80" width="18.9" height="4.45" fill="#db524b"/>
<rect x="1399.16" y="865.10" width="18.9" height="21.75" fill="#58b585"/>
<rect x="1399.16" y="861.30" width="18.9" height="3.85" fill="#e9a236"/>
<rect x="1399.16" y="858.88" width="18.9" height="2.47" fill="#dd559b"/>
<rect x="1399.16" y="856.45" width="18.9" height="2.47" fill="#8dc73c"/>
<rect x="1399.16" y="854.02" width="18.9" height="2.47" fill="#58b585"/>
<rect x="1399.16" y="851.60" width="18.9" height="2.47" fill="#db524b"/>
<rect x="1399.16" y="848.80" width="18.9" height="2.85" fill="#8458ef"/>
<rect x="1399.16" y="842.60" width="18.9" height="6.25" fill="#8dc73c"/>
<rect x="1399.16" y="826.30" width="18.9" height="16.35" fill="#db524b"/>
<rect x="1399.16" y="807.80" width="18.9" height="18.55" fill="#58b585"/>
<rect x="1399.16" y="800.90" width="18.9" height="6.95" fill="#e9a236"/>
<rect x="1399.16" y="798.80" width="18.9" height="2.15" fill="#8458ef"/>
<rect x="1399.16" y="797.00" width="18.9" height="1.85" fill="#db524b"/>
<rect x="1424.60" y="954.00" width="18.9" height="71.05" fill="#4f80ea"/>
<rect x="1424.60" y="947.50" width="18.9" height="6.55" fill="#db524b"/>
<rect x="1424.60" y="914.10" width="18.9" height="33.45" fill="#58b585"/>
<rect x="1424.60" y="905.80" width="18.9" height="8.35" fill="#e9a236"/>
<rect x="1424.60" y="903.38" width="18.9" height="2.47" fill="#dd559b"/>
<rect x="1424.60" y="900.96" width="18.9" height="2.47" fill="#8dc73c"/>
<rect x="1424.60" y="898.54" width="18.9" height="2.47" fill="#55b0d5"/>
<rect x="1424.60" y="896.12" width="18.9" height="2.47" fill="#db524b"/>
<rect x="1424.60" y="893.70" width="18.9" height="2.47" fill="#58b585"/>
<rect x="1424.60" y="888.40" width="18.9" height="5.35" fill="#e9a236"/>
<rect x="1424.60" y="883.10" width="18.9" height="5.35" fill="#8458ef"/>
<rect x="1424.60" y="871.00" width="18.9" height="12.15" fill="#8dc73c"/>
<rect x="1424.60" y="852.00" width="18.9" height="19.05" fill="#db524b"/>
<rect x="1424.60" y="833.50" width="18.9" height="18.55" fill="#58b585"/>
<rect x="1424.60" y="831.20" width="18.9" height="2.35" fill="#db524b"/>
<rect x="1450.04" y="887.70" width="18.9" height="137.35" fill="#4f80ea"/>
<rect x="1450.04" y="882.60" width="18.9" height="5.15" fill="#db524b"/>
<rect x="1450.04" y="864.10" width="18.9" height="18.55" fill="#58b585"/>
<rect x="1450.04" y="859.00" width="18.9" height="5.15" fill="#e9a236"/>
<rect x="1450.04" y="856.80" width="18.9" height="2.25" fill="#dd559b"/>
<rect x="1450.04" y="854.60" width="18.9" height="2.25" fill="#55b0d5"/>
<rect x="1450.04" y="852.40" width="18.9" height="2.25" fill="#8458ef"/>
<rect x="1450.04" y="850.20" width="18.9" height="2.25" fill="#58b585"/>
<rect x="1450.04" y="847.80" width="18.9" height="2.45" fill="#e9a236"/>
<rect x="1450.04" y="844.60" width="18.9" height="3.25" fill="#8458ef"/>
<rect x="1450.04" y="839.10" width="18.9" height="5.55" fill="#8dc73c"/>
<rect x="1450.04" y="825.90" width="18.9" height="13.25" fill="#db524b"/>
<rect x="1450.04" y="808.80" width="18.9" height="17.15" fill="#58b585"/>
<rect x="1450.04" y="807.10" width="18.9" height="1.75" fill="#db524b"/>
<rect x="1475.48" y="885.00" width="18.9" height="140.05" fill="#4f80ea"/>
<rect x="1475.48" y="880.10" width="18.9" height="4.95" fill="#db524b"/>
<rect x="1475.48" y="857.40" width="18.9" height="22.75" fill="#58b585"/>
<rect x="1475.48" y="851.60" width="18.9" height="5.85" fill="#e9a236"/>
<rect x="1475.48" y="849.52" width="18.9" height="2.13" fill="#dd559b"/>
<rect x="1475.48" y="847.44" width="18.9" height="2.13" fill="#8dc73c"/>
<rect x="1475.48" y="845.36" width="18.9" height="2.13" fill="#4f80ea"/>
<rect x="1475.48" y="843.28" width="18.9" height="2.13" fill="#db524b"/>
<rect x="1475.48" y="841.20" width="18.9" height="2.13" fill="#58b585"/>
<rect x="1475.48" y="839.10" width="18.9" height="2.15" fill="#e9a236"/>
<rect x="1475.48" y="836.70" width="18.9" height="2.45" fill="#8458ef"/>
<rect x="1475.48" y="831.40" width="18.9" height="5.35" fill="#8dc73c"/>
<rect x="1475.48" y="812.70" width="18.9" height="18.75" fill="#db524b"/>
<rect x="1475.48" y="797.00" width="18.9" height="15.75" fill="#58b585"/>
<rect x="1475.48" y="791.80" width="18.9" height="5.25" fill="#e9a236"/>
<rect x="1475.48" y="789.50" width="18.9" height="2.35" fill="#8458ef"/>
<rect x="1475.48" y="787.60" width="18.9" height="1.95" fill="#db524b"/>
<rect x="1551.80" y="952.50" width="18.9" height="72.55" fill="#4f80ea"/>
<rect x="1551.80" y="946.50" width="18.9" height="6.05" fill="#db524b"/>
<rect x="1551.80" y="923.40" width="18.9" height="23.15" fill="#58b585"/>
<rect x="1551.80" y="918.30" width="18.9" height="5.15" fill="#e9a236"/>
<rect x="1551.80" y="916.06" width="18.9" height="2.29" fill="#dd559b"/>
<rect x="1551.80" y="913.82" width="18.9" height="2.29" fill="#55b0d5"/>
<rect x="1551.80" y="911.58" width="18.9" height="2.29" fill="#8dc73c"/>
<rect x="1551.80" y="909.34" width="18.9" height="2.29" fill="#4f80ea"/>
<rect x="1551.80" y="907.10" width="18.9" height="2.29" fill="#db524b"/>
<rect x="1551.80" y="906.30" width="18.9" height="0.85" fill="#58b585"/>
<rect x="1551.80" y="899.10" width="18.9" height="7.25" fill="#e9a236"/>
<rect x="1551.80" y="895.70" width="18.9" height="3.45" fill="#8458ef"/>
<rect x="1551.80" y="890.00" width="18.9" height="5.75" fill="#8dc73c"/>
<rect x="1551.80" y="877.50" width="18.9" height="12.55" fill="#db524b"/>
<rect x="1551.80" y="864.40" width="18.9" height="13.15" fill="#58b585"/>
<rect x="1551.80" y="862.10" width="18.9" height="2.35" fill="#db524b"/>
<rect x="1577.24" y="864.40" width="18.9" height="160.65" fill="#4f80ea"/>
<rect x="1577.24" y="860.90" width="18.9" height="3.55" fill="#db524b"/>
<rect x="1577.24" y="847.70" width="18.9" height="13.25" fill="#58b585"/>
<rect x="1577.24" y="845.50" width="18.9" height="2.25" fill="#e9a236"/>
<rect x="1577.24" y="843.38" width="18.9" height="2.17" fill="#dd559b"/>
<rect x="1577.24" y="841.25" width="18.9" height="2.17" fill="#8dc73c"/>
<rect x="1577.24" y="839.12" width="18.9" height="2.17" fill="#4f80ea"/>
<rect x="1577.24" y="837.00" width="18.9" height="2.17" fill="#e9a236"/>
<rect x="1577.24" y="834.70" width="18.9" height="2.35" fill="#8dc73c"/>
<rect x="1577.24" y="816.10" width="18.9" height="18.65" fill="#db524b"/>
<rect x="1577.24" y="798.10" width="18.9" height="18.05" fill="#58b585"/>
<rect x="1577.24" y="796.70" width="18.9" height="1.45" fill="#db524b"/>
<rect x="1602.68" y="941.40" width="18.9" height="83.65" fill="#4f80ea"/>
<rect x="1602.68" y="934.90" width="18.9" height="6.55" fill="#db524b"/>
<rect x="1602.68" y="902.50" width="18.9" height="32.45" fill="#58b585"/>
<rect x="1602.68" y="895.20" width="18.9" height="7.35" fill="#e9a236"/>
<rect x="1602.68" y="892.75" width="18.9" height="2.50" fill="#dd559b"/>
<rect x="1602.68" y="890.30" width="18.9" height="2.50" fill="#8dc73c"/>
<rect x="1602.68" y="887.85" width="18.9" height="2.50" fill="#4f80ea"/>
<rect x="1602.68" y="885.40" width="18.9" height="2.50" fill="#db524b"/>
<rect x="1602.68" y="883.20" width="18.9" height="2.25" fill="#58b585"/>
<rect x="1602.68" y="877.50" width="18.9" height="5.75" fill="#e9a236"/>
<rect x="1602.68" y="873.80" width="18.9" height="3.75" fill="#8458ef"/>
<rect x="1602.68" y="863.20" width="18.9" height="10.65" fill="#8dc73c"/>
<rect x="1602.68" y="844.30" width="18.9" height="18.95" fill="#db524b"/>
<rect x="1602.68" y="826.20" width="18.9" height="18.15" fill="#58b585"/>
<rect x="1602.68" y="823.80" width="18.9" height="2.45" fill="#db524b"/>
<rect x="1628.12" y="852.40" width="18.9" height="172.65" fill="#4f80ea"/>
<rect x="1628.12" y="845.50" width="18.9" height="6.95" fill="#db524b"/>
<rect x="1628.12" y="821.60" width="18.9" height="23.95" fill="#58b585"/>
<rect x="1628.12" y="815.90" width="18.9" height="5.75" fill="#e9a236"/>
<rect x="1628.12" y="813.48" width="18.9" height="2.47" fill="#dd559b"/>
<rect x="1628.12" y="811.05" width="18.9" height="2.47" fill="#55b0d5"/>
<rect x="1628.12" y="808.62" width="18.9" height="2.47" fill="#4f80ea"/>
<rect x="1628.12" y="806.20" width="18.9" height="2.47" fill="#db524b"/>
<rect x="1628.12" y="803.90" width="18.9" height="2.35" fill="#58b585"/>
<rect x="1628.12" y="801.50" width="18.9" height="2.45" fill="#e9a236"/>
<rect x="1628.12" y="799.30" width="18.9" height="2.25" fill="#8458ef"/>
<rect x="1628.12" y="793.30" width="18.9" height="6.05" fill="#8dc73c"/>
<rect x="1628.12" y="781.00" width="18.9" height="12.35" fill="#db524b"/>
<rect x="1628.12" y="767.30" width="18.9" height="13.75" fill="#58b585"/>
<rect x="1628.12" y="765.10" width="18.9" height="2.25" fill="#db524b"/>
<rect x="1653.56" y="835.60" width="18.9" height="189.45" fill="#4f80ea"/>
<rect x="1653.56" y="828.90" width="18.9" height="6.75" fill="#db524b"/>
<rect x="1653.56" y="802.70" width="18.9" height="26.25" fill="#58b585"/>
<rect x="1653.56" y="796.40" width="18.9" height="6.35" fill="#e9a236"/>
<rect x="1653.56" y="793.50" width="18.9" height="2.95" fill="#dd559b"/>
<rect x="1653.56" y="790.60" width="18.9" height="2.95" fill="#8dc73c"/>
<rect x="1653.56" y="787.70" width="18.9" height="2.95" fill="#4f80ea"/>
<rect x="1653.56" y="784.80" width="18.9" height="2.95" fill="#db524b"/>
<rect x="1653.56" y="782.70" width="18.9" height="2.15" fill="#58b585"/>
<rect x="1653.56" y="780.00" width="18.9" height="2.75" fill="#e9a236"/>
<rect x="1653.56" y="776.20" width="18.9" height="3.85" fill="#8458ef"/>
<rect x="1653.56" y="768.00" width="18.9" height="8.25" fill="#8dc73c"/>
<rect x="1653.56" y="756.00" width="18.9" height="12.05" fill="#db524b"/>
<rect x="1653.56" y="740.30" width="18.9" height="15.75" fill="#58b585"/>
<rect x="1653.56" y="737.70" width="18.9" height="2.65" fill="#db524b"/>
<rect x="1729.88" y="936.90" width="18.9" height="88.15" fill="#4f80ea"/>
<rect x="1729.88" y="929.70" width="18.9" height="7.25" fill="#db524b"/>
<rect x="1729.88" y="900.60" width="18.9" height="29.15" fill="#58b585"/>
<rect x="1729.88" y="893.80" width="18.9" height="6.85" fill="#e9a236"/>
<rect x="1729.88" y="891.80" width="18.9" height="2.05" fill="#8458ef"/>
<rect x="1729.88" y="889.80" width="18.9" height="2.05" fill="#dd559b"/>
<rect x="1729.88" y="887.80" width="18.9" height="2.05" fill="#55b0d5"/>
<rect x="1729.88" y="885.80" width="18.9" height="2.05" fill="#8dc73c"/>
<rect x="1729.88" y="883.80" width="18.9" height="2.05" fill="#4f80ea"/>
<rect x="1729.88" y="881.80" width="18.9" height="2.05" fill="#db524b"/>
<rect x="1729.88" y="878.80" width="18.9" height="3.05" fill="#58b585"/>
<rect x="1729.88" y="873.00" width="18.9" height="5.85" fill="#e9a236"/>
<rect x="1729.88" y="868.90" width="18.9" height="4.15" fill="#8458ef"/>
<rect x="1729.88" y="861.70" width="18.9" height="7.25" fill="#8dc73c"/>
<rect x="1729.88" y="849.70" width="18.9" height="12.05" fill="#db524b"/>
<rect x="1729.88" y="834.50" width="18.9" height="15.25" fill="#58b585"/>
<rect x="1729.88" y="832.20" width="18.9" height="2.35" fill="#db524b"/>
<line x1="150" y1="712.5" x2="150" y2="1025.8" stroke="#666" stroke-width="1.6"/>
<line x1="149.2" y1="1025" x2="1752" y2="1025" stroke="#666" stroke-width="1.6"/>
<line x1="140.5" y1="1025.0" x2="150" y2="1025.0" stroke="#666" stroke-width="1.6"/>
<text x="136" y="1034.7" text-anchor="end" font-size="26.8" fill="#666">0</text>
<line x1="140.5" y1="947.1" x2="150" y2="947.1" stroke="#666" stroke-width="1.6"/>
<text x="136" y="956.8" text-anchor="end" font-size="26.8" fill="#666">6000</text>
<line x1="140.5" y1="869.2" x2="150" y2="869.2" stroke="#666" stroke-width="1.6"/>
<text x="136" y="878.9" text-anchor="end" font-size="26.8" fill="#666">12000</text>
<line x1="140.5" y1="791.3" x2="150" y2="791.3" stroke="#666" stroke-width="1.6"/>
<text x="136" y="801.0" text-anchor="end" font-size="26.8" fill="#666">18000</text>
<line x1="140.5" y1="713.4" x2="150" y2="713.4" stroke="#666" stroke-width="1.6"/>
<text x="136" y="726.2" text-anchor="end" font-size="26.8" fill="#666" textLength="76.5" lengthAdjust="spacingAndGlyphs">24000</text>
<line x1="163.1" y1="1025" x2="163.1" y2="1034" stroke="#666" stroke-width="1.6"/>
<text transform="translate(162.2,1038.4) rotate(-45)" text-anchor="end" font-size="18.9" fill="#666" dy="0.71em">01/07/2025</text>
<line x1="214.0" y1="1025" x2="214.0" y2="1034" stroke="#666" stroke-width="1.6"/>
<text transform="translate(213.1,1038.4) rotate(-45)" text-anchor="end" font-size="18.9" fill="#666" dy="0.71em">03/07/2025</text>
<line x1="264.9" y1="1025" x2="264.9" y2="1034" stroke="#666" stroke-width="1.6"/>
<text transform="translate(264.0,1038.4) rotate(-45)" text-anchor="end" font-size="18.9" fill="#666" dy="0.71em">05/07/2025</text>
<line x1="315.7" y1="1025" x2="315.7" y2="1034" stroke="#666" stroke-width="1.6"/>
<text transform="translate(314.8,1038.4) rotate(-45)" text-anchor="end" font-size="18.9" fill="#666" dy="0.71em">07/07/2025</text>
<line x1="366.6" y1="1025" x2="366.6" y2="1034" stroke="#666" stroke-width="1.6"/>
<text transform="translate(365.7,1038.4) rotate(-45)" text-anchor="end" font-size="18.9" fill="#666" dy="0.71em">09/07/2025</text>
<line x1="417.5" y1="1025" x2="417.5" y2="1034" stroke="#666" stroke-width="1.6"/>
<text transform="translate(416.6,1038.4) rotate(-45)" text-anchor="end" font-size="18.9" fill="#666" dy="0.71em">11/07/2025</text>
<line x1="468.4" y1="1025" x2="468.4" y2="1034" stroke="#666" stroke-width="1.6"/>
<text transform="translate(467.5,1038.4) rotate(-45)" text-anchor="end" font-size="18.9" fill="#666" dy="0.71em">13/07/2025</text>
<line x1="519.3" y1="1025" x2="519.3" y2="1034" stroke="#666" stroke-width="1.6"/>
<text transform="translate(518.4,1038.4) rotate(-45)" text-anchor="end" font-size="18.9" fill="#666" dy="0.71em">15/07/2025</text>
<line x1="570.1" y1="1025" x2="570.1" y2="1034" stroke="#666" stroke-width="1.6"/>
<text transform="translate(569.2,1038.4) rotate(-45)" text-anchor="end" font-size="18.9" fill="#666" dy="0.71em">17/07/2025</text>
<line x1="621.0" y1="1025" x2="621.0" y2="1034" stroke="#666" stroke-width="1.6"/>
<text transform="translate(620.1,1038.4) rotate(-45)" text-anchor="end" font-size="18.9" fill="#666" dy="0.71em">19/07/2025</text>
<line x1="671.9" y1="1025" x2="671.9" y2="1034" stroke="#666" stroke-width="1.6"/>
<text transform="translate(671.0,1038.4) rotate(-45)" text-anchor="end" font-size="18.9" fill="#666" dy="0.71em">21/07/2025</text>
<line x1="722.8" y1="1025" x2="722.8" y2="1034" stroke="#666" stroke-width="1.6"/>
<text transform="translate(721.9,1038.4) rotate(-45)" text-anchor="end" font-size="18.9" fill="#666" dy="0.71em">23/07/2025</text>
<line x1="773.7" y1="1025" x2="773.7" y2="1034" stroke="#666" stroke-width="1.6"/>
<text transform="translate(772.8,1038.4) rotate(-45)" text-anchor="end" font-size="18.9" fill="#666" dy="0.71em">25/07/2025</text>
<line x1="824.5" y1="1025" x2="824.5" y2="1034" stroke="#666" stroke-width="1.6"/>
<text transform="translate(823.6,1038.4) rotate(-45)" text-anchor="end" font-size="18.9" fill="#666" dy="0.71em">27/07/2025</text>
<line x1="875.4" y1="1025" x2="875.4" y2="1034" stroke="#666" stroke-width="1.6"/>
<text transform="translate(874.5,1038.4) rotate(-45)" text-anchor="end" font-size="18.9" fill="#666" dy="0.71em">29/07/2025</text>
<line x1="926.3" y1="1025" x2="926.3" y2="1034" stroke="#666" stroke-width="1.6"/>
<text transform="translate(925.4,1038.4) rotate(-45)" text-anchor="end" font-size="18.9" fill="#666" dy="0.71em">31/07/2025</text>
<line x1="977.2" y1="1025" x2="977.2" y2="1034" stroke="#666" stroke-width="1.6"/>
<text transform="translate(976.3,1038.4) rotate(-45)" text-anchor="end" font-size="18.9" fill="#666" dy="0.71em">02/08/2025</text>
<line x1="1028.1" y1="1025" x2="1028.1" y2="1034" stroke="#666" stroke-width="1.6"/>
<text transform="translate(1027.2,1038.4) rotate(-45)" text-anchor="end" font-size="18.9" fill="#666" dy="0.71em">04/08/2025</text>
<line x1="1078.9" y1="1025" x2="1078.9" y2="1034" stroke="#666" stroke-width="1.6"/>
<text transform="translate(1078.0,1038.4) rotate(-45)" text-anchor="end" font-size="18.9" fill="#666" dy="0.71em">06/08/2025</text>
<line x1="1129.8" y1="1025" x2="1129.8" y2="1034" stroke="#666" stroke-width="1.6"/>
<text transform="translate(1128.9,1038.4) rotate(-45)" text-anchor="end" font-size="18.9" fill="#666" dy="0.71em">08/08/2025</text>
<line x1="1180.7" y1="1025" x2="1180.7" y2="1034" stroke="#666" stroke-width="1.6"/>
<text transform="translate(1179.8,1038.4) rotate(-45)" text-anchor="end" font-size="18.9" fill="#666" dy="0.71em">10/08/2025</text>
<line x1="1231.6" y1="1025" x2="1231.6" y2="1034" stroke="#666" stroke-width="1.6"/>
<text transform="translate(1230.7,1038.4) rotate(-45)" text-anchor="end" font-size="18.9" fill="#666" dy="0.71em">12/08/2025</text>
<line x1="1282.5" y1="1025" x2="1282.5" y2="1034" stroke="#666" stroke-width="1.6"/>
<text transform="translate(1281.6,1038.4) rotate(-45)" text-anchor="end" font-size="18.9" fill="#666" dy="0.71em">14/08/2025</text>
<line x1="1333.3" y1="1025" x2="1333.3" y2="1034" stroke="#666" stroke-width="1.6"/>
<text transform="translate(1332.4,1038.4) rotate(-45)" text-anchor="end" font-size="18.9" fill="#666" dy="0.71em">16/08/2025</text>
<line x1="1384.2" y1="1025" x2="1384.2" y2="1034" stroke="#666" stroke-width="1.6"/>
<text transform="translate(1383.3,1038.4) rotate(-45)" text-anchor="end" font-size="18.9" fill="#666" dy="0.71em">18/08/2025</text>
<line x1="1435.1" y1="1025" x2="1435.1" y2="1034" stroke="#666" stroke-width="1.6"/>
<text transform="translate(1434.2,1038.4) rotate(-45)" text-anchor="end" font-size="18.9" fill="#666" dy="0.71em">20/08/2025</text>
<line x1="1486.0" y1="1025" x2="1486.0" y2="1034" stroke="#666" stroke-width="1.6"/>
<text transform="translate(1485.1,1038.4) rotate(-45)" text-anchor="end" font-size="18.9" fill="#666" dy="0.71em">22/08/2025</text>
<line x1="1536.9" y1="1025" x2="1536.9" y2="1034" stroke="#666" stroke-width="1.6"/>
<text transform="translate(1536.0,1038.4) rotate(-45)" text-anchor="end" font-size="18.9" fill="#666" dy="0.71em">24/08/2025</text>
<line x1="1587.7" y1="1025" x2="1587.7" y2="1034" stroke="#666" stroke-width="1.6"/>
<text transform="translate(1586.8,1038.4) rotate(-45)" text-anchor="end" font-size="18.9" fill="#666" dy="0.71em">26/08/2025</text>
<line x1="1638.6" y1="1025" x2="1638.6" y2="1034" stroke="#666" stroke-width="1.6"/>
<text transform="translate(1637.7,1038.4) rotate(-45)" text-anchor="end" font-size="18.9" fill="#666" dy="0.71em">28/08/2025</text>
<line x1="1689.5" y1="1025" x2="1689.5" y2="1034" stroke="#666" stroke-width="1.6"/>
<text transform="translate(1688.6,1038.4) rotate(-45)" text-anchor="end" font-size="18.9" fill="#666" dy="0.71em">30/08/2025</text>
<line x1="1740.4" y1="1025" x2="1740.4" y2="1034" stroke="#666" stroke-width="1.6"/>
<text transform="translate(1739.5,1038.4) rotate(-45)" text-anchor="end" font-size="18.9" fill="#666" dy="0.71em">01/09/2025</text>
<rect x="55.1" y="1166.0" width="22.4" height="15.3" fill="#4f80ea"/>
<text x="83.5" y="1179.8" font-size="26" fill="#4f80ea" textLength="258.6" lengthAdjust="spacingAndGlyphs">Paper And Cardboard</text>
<rect x="357.6" y="1166.0" width="22.4" height="15.3" fill="#db524b"/>
<text x="386.0" y="1179.8" font-size="26" fill="#db524b" textLength="189.0" lengthAdjust="spacingAndGlyphs">Pmd Plastic Foil</text>
<rect x="591.0" y="1166.0" width="22.4" height="15.3" fill="#58b585"/>
<text x="619.4" y="1179.8" font-size="26" fill="#58b585" textLength="261.6" lengthAdjust="spacingAndGlyphs">Pmd Plastic Packages</text>
<rect x="897.4" y="1166.0" width="22.4" height="15.3" fill="#e9a236"/>
<text x="925.8" y="1179.8" font-size="26" fill="#e9a236" textLength="117.9" lengthAdjust="spacingAndGlyphs">Black Bag</text>
<rect x="1060.1" y="1166.0" width="22.4" height="15.3" fill="#8458ef"/>
<text x="1088.5" y="1179.8" font-size="26" fill="#8458ef" textLength="175.2" lengthAdjust="spacingAndGlyphs">Wood Massive</text>
<rect x="1278.8" y="1166.0" width="22.4" height="15.3" fill="#dd559b"/>
<text x="1307.2" y="1179.8" font-size="26" fill="#dd559b" textLength="44.5" lengthAdjust="spacingAndGlyphs">Eps</text>
<rect x="1367.2" y="1166.0" width="22.4" height="15.3" fill="#55b0d5"/>
<text x="1395.6" y="1179.8" font-size="26" fill="#55b0d5" textLength="110.1" lengthAdjust="spacingAndGlyphs">Grey Bag</text>
<rect x="1520.8" y="1166.0" width="22.4" height="15.3" fill="#8dc73c"/>
<text x="1549.2" y="1179.8" font-size="26" fill="#8dc73c" textLength="66.5" lengthAdjust="spacingAndGlyphs">Metal</text>
<rect x="1631.7" y="1166.0" width="22.4" height="15.3" fill="#4f80ea"/>
<text x="1660.1" y="1179.8" font-size="26" fill="#4f80ea" textLength="76.6" lengthAdjust="spacingAndGlyphs">Straps</text>
<rect x="113.4" y="1203.8" width="22.4" height="15.3" fill="#db524b"/>
<text x="141.8" y="1217.6" font-size="26" fill="#db524b" textLength="156.1" lengthAdjust="spacingAndGlyphs">Hard Plastics</text>
<rect x="313.8" y="1203.8" width="22.4" height="15.3" fill="#58b585"/>
<text x="342.2" y="1217.6" font-size="26" fill="#58b585" textLength="197.8" lengthAdjust="spacingAndGlyphs">Transparent Bag</text>
<rect x="556.5" y="1203.8" width="22.4" height="15.3" fill="#e9a236"/>
<text x="584.9" y="1217.6" font-size="26" fill="#e9a236" textLength="171.6" lengthAdjust="spacingAndGlyphs">Kitchen Waste</text>
<rect x="773.3" y="1203.8" width="22.4" height="15.3" fill="#8458ef"/>
<text x="801.7" y="1217.6" font-size="26" fill="#8458ef" textLength="104.3" lengthAdjust="spacingAndGlyphs">Blue Bag</text>
<rect x="921.3" y="1203.8" width="22.4" height="15.3" fill="#dd559b"/>
<text x="949.7" y="1217.6" font-size="26" fill="#dd559b" textLength="224.6" lengthAdjust="spacingAndGlyphs">Pmd Drink Cartons</text>
<rect x="1190.3" y="1203.8" width="22.4" height="15.3" fill="#55b0d5"/>
<text x="1218.7" y="1217.6" font-size="26" fill="#55b0d5" textLength="166.5" lengthAdjust="spacingAndGlyphs">Colored Glass</text>
<rect x="1401.1" y="1203.8" width="22.4" height="15.3" fill="#8dc73c"/>
<text x="1429.5" y="1217.6" font-size="26" fill="#8dc73c" textLength="249.9" lengthAdjust="spacingAndGlyphs">Pmd Metal Packages</text>
<rect x="138.6" y="1241.7" width="22.4" height="15.3" fill="#4f80ea"/>
<text x="167.0" y="1255.5" font-size="26" fill="#4f80ea" textLength="134.0" lengthAdjust="spacingAndGlyphs">Yellow Bag</text>
<rect x="317.0" y="1241.7" width="22.4" height="15.3" fill="#db524b"/>
<text x="345.4" y="1255.5" font-size="26" fill="#db524b" textLength="93.6" lengthAdjust="spacingAndGlyphs">Huisvuil</text>
<rect x="455.6" y="1241.7" width="22.4" height="15.3" fill="#58b585"/>
<text x="484.0" y="1255.5" font-size="26" fill="#58b585" textLength="71.6" lengthAdjust="spacingAndGlyphs">Blauw</text>
<rect x="572.0" y="1241.7" width="22.4" height="15.3" fill="#e9a236"/>
<text x="600.4" y="1255.5" font-size="26" fill="#e9a236" textLength="53.9" lengthAdjust="spacingAndGlyphs">Geel</text>
<rect x="669.8" y="1241.7" width="22.4" height="15.3" fill="#8458ef"/>
<text x="698.2" y="1255.5" font-size="26" fill="#8458ef" textLength="72.1" lengthAdjust="spacingAndGlyphs">Groen</text>
<rect x="786.7" y="1241.7" width="22.4" height="15.3" fill="#dd559b"/>
<text x="815.1" y="1255.5" font-size="26" fill="#dd559b" textLength="77.9" lengthAdjust="spacingAndGlyphs">Oranje</text>
<rect x="908.4" y="1241.7" width="22.4" height="15.3" fill="#55b0d5"/>
<text x="936.8" y="1255.5" font-size="26" fill="#55b0d5" textLength="213.2" lengthAdjust="spacingAndGlyphs">Fire Extinguishers</text>
<rect x="1165.0" y="1241.7" width="22.4" height="15.3" fill="#8dc73c"/>
<text x="1193.4" y="1255.5" font-size="26" fill="#8dc73c" textLength="141.4" lengthAdjust="spacingAndGlyphs">Orange Bag</text>
<rect x="1351.2" y="1241.7" width="22.4" height="15.3" fill="#4f80ea"/>
<text x="1379.6" y="1255.5" font-size="26" fill="#4f80ea" textLength="125.7" lengthAdjust="spacingAndGlyphs">Green Bag</text>
<rect x="1520.8" y="1241.7" width="22.4" height="15.3" fill="#db524b"/>
<text x="1549.2" y="1255.5" font-size="26" fill="#db524b" textLength="104.1" lengthAdjust="spacingAndGlyphs">Anomaly</text>
</svg>
</body></html>
